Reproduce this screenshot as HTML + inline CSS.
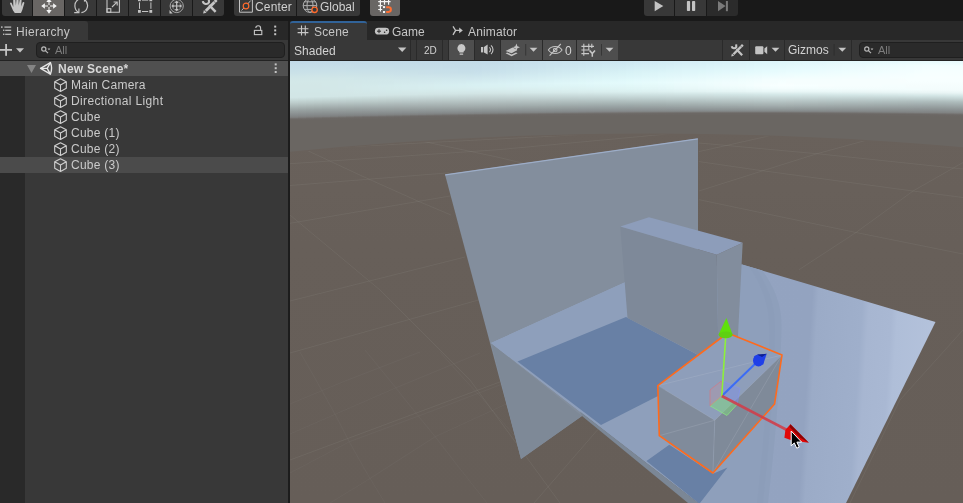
<!DOCTYPE html>
<html>
<head>
<meta charset="utf-8">
<title>Unity Editor</title>
<style>
html,body{margin:0;padding:0;background:#383838;}
body{width:963px;height:503px;overflow:hidden;position:relative;font-family:"Liberation Sans",sans-serif;font-size:12px;color:#d2d2d2;}
.abs{position:absolute;}
.tabtxt,.rtxt,.txt{will-change:transform;}
#topbar{left:0;top:0;width:963px;height:21px;background:#191919;}
.tb{position:absolute;top:0;height:16px;background:#383838;}
.tb.on{background:#696664;}
.tb.dis{background:#2b2b2b;}
.tb svg{position:absolute;left:0;top:0;}
#tabbar{left:0;top:21px;width:963px;height:19px;background:#282828;}
.tab{position:absolute;top:21px;height:19px;background:#383838;}
.tabtxt{position:absolute;top:25px;font-size:12px;color:#c6c6c6;white-space:nowrap;line-height:14px;letter-spacing:0.15px;}
#tool1{left:0;top:40px;width:288px;height:20px;background:#383838;}
#tool2{left:290px;top:40px;width:673px;height:20px;background:#383838;}
.search{position:absolute;top:42px;height:16px;background:#2a2a2a;border:1px solid #1f1f1f;border-radius:4px;box-sizing:border-box;}
.sb{position:absolute;top:40px;height:20px;background:#383838;}
.sb.on{background:#4e4e4e;}
.sep{position:absolute;top:40px;height:20px;width:1px;background:#2a2a2a;}
#hier{left:0;top:60px;width:288px;height:443px;background:#383838;}
#gutter{left:0;top:60px;width:25px;height:443px;background:#292929;}
.row{position:absolute;left:0;width:288px;height:16px;}
.row.sel{background:#4b4b4b;}
.rtxt{position:absolute;font-size:12px;line-height:16px;transform:translateY(-0.4px);color:#cacaca;white-space:nowrap;letter-spacing:0.25px;}
#divider{left:288px;top:21px;width:2px;height:482px;background:#1c1c1c;}
#scene{left:290px;top:61px;width:673px;height:442px;overflow:hidden;}
</style>
</head>
<body>
<!-- TOP TOOLBAR -->
<div id="topbar" class="abs"></div>
<div class="tb" style="left:2px;width:30px;border-bottom-left-radius:3px;"></div>
<div class="tb on" style="left:33px;width:31px;"></div>
<div class="tb" style="left:65px;width:31px;"></div>
<div class="tb" style="left:97px;width:31px;"></div>
<div class="tb" style="left:129px;width:31px;"></div>
<div class="tb" style="left:161px;width:31px;"></div>
<div class="tb" style="left:193px;width:31px;border-bottom-right-radius:3px;"></div>
<div class="tb" style="left:234px;width:62px;border-bottom-left-radius:3px;"></div>
<div class="tb" style="left:297px;width:63px;border-bottom-right-radius:3px;"></div>
<div class="tb on" style="left:370px;width:30px;border-bottom-left-radius:3px;border-bottom-right-radius:3px;"></div>
<div class="tb" style="left:644px;width:30px;border-bottom-left-radius:3px;"></div>
<div class="tb" style="left:675px;width:31px;"></div>
<div class="tb dis" style="left:707px;width:31px;border-bottom-right-radius:3px;"></div>
<div class="abs txt" style="left:255px;top:-0.5px;font-size:12px;line-height:15px;color:#d0d0d0;letter-spacing:0.15px;">Center</div>
<div class="abs txt" style="left:320px;top:-0.5px;font-size:12px;line-height:15px;color:#d0d0d0;">Global</div>

<!-- TAB BAR -->
<div id="tabbar" class="abs"></div>
<div class="tab" style="left:0;width:88px;border-top-right-radius:3px;"></div>
<div class="tab" style="left:290px;width:77px;border-top:2px solid #316399;box-sizing:border-box;border-top-left-radius:3px;border-top-right-radius:3px;"></div>
<div class="tabtxt" style="left:16px;letter-spacing:0.3px;">Hierarchy</div>
<div class="tabtxt" style="left:314px;">Scene</div>
<div class="tabtxt" style="left:392px;letter-spacing:0;">Game</div>
<div class="tabtxt" style="left:467.5px;">Animator</div>

<!-- TOOL ROWS -->
<div id="tool1" class="abs"></div>
<div id="tool2" class="abs"></div>
<div class="search" style="left:36px;width:249px;"></div>
<div class="abs txt" style="left:54.8px;top:42.8px;font-size:11px;line-height:14px;color:#7d7d7d;">All</div>
<div class="search" style="left:859px;width:120px;"></div>
<div class="abs txt" style="left:878.2px;top:42.8px;font-size:11px;line-height:14px;color:#7d7d7d;">All</div>

<div class="abs txt" style="left:294px;top:43.5px;font-size:12px;line-height:14px;color:#d2d2d2;letter-spacing:0.05px;">Shaded</div>
<div class="sep" style="left:410px;"></div>
<div class="sep" style="left:416px;"></div>
<div class="abs txt" style="left:423.5px;top:44px;font-size:10px;line-height:13px;color:#d2d2d2;">2D</div>
<div class="sep" style="left:442px;"></div>
<div class="sep" style="left:448px;"></div>
<div class="sb on" style="left:449px;width:25px;"></div>
<div class="sep" style="left:474px;"></div>
<div class="sep" style="left:500px;"></div>
<div class="sb on" style="left:501px;width:41px;"></div>
<div class="sep" style="left:542px;"></div>
<div class="sb on" style="left:543px;width:33px;"></div>
<div class="sep" style="left:576px;"></div>
<div class="sb on" style="left:577px;width:41px;"></div>
<div class="abs txt" style="left:564.8px;top:43.5px;font-size:12px;line-height:14px;color:#d2d2d2;">0</div>
<div class="sep" style="left:722px;"></div>
<div class="sep" style="left:749px;"></div>
<div class="sep" style="left:784px;"></div>
<div class="sep" style="left:851px;"></div>
<div class="abs txt" style="left:788px;top:43px;font-size:12px;line-height:14px;color:#d2d2d2;letter-spacing:0;">Gizmos</div>

<!-- HIERARCHY -->
<div id="hier" class="abs"></div>
<div id="gutter" class="abs"></div>
<div class="abs" style="left:0;top:60px;width:288px;height:1px;background:#232323;"></div>
<div class="row sel" style="top:61px;height:15px;background:#505050;"></div>
<div class="row sel" style="top:157px;"></div>
<div class="rtxt" style="left:58px;top:61px;font-weight:bold;color:#d8d8d8;">New Scene*</div>
<div class="rtxt" style="left:71px;top:77px;">Main Camera</div>
<div class="rtxt" style="left:71px;top:93px;letter-spacing:0.37px;">Directional Light</div>
<div class="rtxt" style="left:71px;top:109px;">Cube</div>
<div class="rtxt" style="left:71px;top:125px;">Cube (1)</div>
<div class="rtxt" style="left:71px;top:141px;">Cube (2)</div>
<div class="rtxt" style="left:71px;top:157px;">Cube (3)</div>

<div id="divider" class="abs"></div>
<div class="abs" style="left:290px;top:60px;width:673px;height:1px;background:#232323;"></div>

<!-- SCENE VIEW -->
<div id="scene" class="abs">
<svg id="scenesvg" width="673" height="442" viewBox="290 61 673 442">
<defs><linearGradient id="sk0" gradientUnits="userSpaceOnUse" x1="0" y1="58.35" x2="0" y2="121.35"><stop offset="0.0000" stop-color="#c1d9e8"/><stop offset="0.0476" stop-color="#c2dae8"/><stop offset="0.0952" stop-color="#c4dce8"/><stop offset="0.1429" stop-color="#c6dee8"/><stop offset="0.1905" stop-color="#c8e0e8"/><stop offset="0.2381" stop-color="#cbe2e8"/><stop offset="0.2857" stop-color="#cfe5e8"/><stop offset="0.3333" stop-color="#d2e7e8"/><stop offset="0.3810" stop-color="#d3e8e8"/><stop offset="0.4286" stop-color="#d3e7e7"/><stop offset="0.4762" stop-color="#d3e7e7"/><stop offset="0.5238" stop-color="#d2e7e7"/><stop offset="0.5714" stop-color="#d2e6e6"/><stop offset="0.6190" stop-color="#d2e6e6"/><stop offset="0.6667" stop-color="#c6d8d7"/><stop offset="0.7143" stop-color="#bac9c8"/><stop offset="0.7619" stop-color="#abb8b7"/><stop offset="0.8254" stop-color="#98a1a1"/><stop offset="0.8413" stop-color="#949c9c"/><stop offset="0.8571" stop-color="#919898"/><stop offset="0.8730" stop-color="#8d9394"/><stop offset="0.8889" stop-color="#898e8f"/><stop offset="0.9048" stop-color="#858a8b"/><stop offset="0.9206" stop-color="#828585"/><stop offset="0.9365" stop-color="#7e7f7f"/><stop offset="0.9524" stop-color="#73716f"/><stop offset="0.9683" stop-color="#6c6865"/><stop offset="0.9841" stop-color="#6b6764"/><stop offset="1.0000" stop-color="#6a6662"/></linearGradient><linearGradient id="sk1" gradientUnits="userSpaceOnUse" x1="0" y1="58.13" x2="0" y2="121.13"><stop offset="0.0000" stop-color="#c1d9e8"/><stop offset="0.0476" stop-color="#c2dae8"/><stop offset="0.0952" stop-color="#c4dce8"/><stop offset="0.1429" stop-color="#c6dee8"/><stop offset="0.1905" stop-color="#c8e0e8"/><stop offset="0.2381" stop-color="#cbe2e8"/><stop offset="0.2857" stop-color="#cfe5e8"/><stop offset="0.3333" stop-color="#d2e7e8"/><stop offset="0.3810" stop-color="#d3e8e8"/><stop offset="0.4286" stop-color="#d3e7e7"/><stop offset="0.4762" stop-color="#d3e7e7"/><stop offset="0.5238" stop-color="#d2e7e7"/><stop offset="0.5714" stop-color="#d2e6e6"/><stop offset="0.6190" stop-color="#d2e6e6"/><stop offset="0.6667" stop-color="#c6d8d7"/><stop offset="0.7143" stop-color="#bac9c8"/><stop offset="0.7619" stop-color="#abb8b7"/><stop offset="0.8254" stop-color="#98a1a1"/><stop offset="0.8413" stop-color="#949c9c"/><stop offset="0.8571" stop-color="#919898"/><stop offset="0.8730" stop-color="#8d9394"/><stop offset="0.8889" stop-color="#898e8f"/><stop offset="0.9048" stop-color="#858a8b"/><stop offset="0.9206" stop-color="#828585"/><stop offset="0.9365" stop-color="#7e7f7f"/><stop offset="0.9524" stop-color="#73716f"/><stop offset="0.9683" stop-color="#6c6865"/><stop offset="0.9841" stop-color="#6b6764"/><stop offset="1.0000" stop-color="#6a6662"/></linearGradient><linearGradient id="sk2" gradientUnits="userSpaceOnUse" x1="0" y1="57.92" x2="0" y2="120.92"><stop offset="0.0000" stop-color="#c1d9e8"/><stop offset="0.0476" stop-color="#c2dae8"/><stop offset="0.0952" stop-color="#c4dce8"/><stop offset="0.1429" stop-color="#c6dee8"/><stop offset="0.1905" stop-color="#c8e0e8"/><stop offset="0.2381" stop-color="#cbe2e8"/><stop offset="0.2857" stop-color="#cfe5e8"/><stop offset="0.3333" stop-color="#d2e7e8"/><stop offset="0.3810" stop-color="#d3e8e8"/><stop offset="0.4286" stop-color="#d3e7e7"/><stop offset="0.4762" stop-color="#d3e7e7"/><stop offset="0.5238" stop-color="#d2e7e7"/><stop offset="0.5714" stop-color="#d2e6e6"/><stop offset="0.6190" stop-color="#d2e6e6"/><stop offset="0.6667" stop-color="#c6d8d7"/><stop offset="0.7143" stop-color="#bac9c8"/><stop offset="0.7619" stop-color="#abb8b7"/><stop offset="0.8254" stop-color="#98a1a1"/><stop offset="0.8413" stop-color="#949c9c"/><stop offset="0.8571" stop-color="#919898"/><stop offset="0.8730" stop-color="#8d9394"/><stop offset="0.8889" stop-color="#898e8f"/><stop offset="0.9048" stop-color="#858a8b"/><stop offset="0.9206" stop-color="#828585"/><stop offset="0.9365" stop-color="#7e7f7f"/><stop offset="0.9524" stop-color="#73716f"/><stop offset="0.9683" stop-color="#6c6865"/><stop offset="0.9841" stop-color="#6b6764"/><stop offset="1.0000" stop-color="#6a6662"/></linearGradient><linearGradient id="sk3" gradientUnits="userSpaceOnUse" x1="0" y1="57.72" x2="0" y2="120.72"><stop offset="0.0000" stop-color="#c1d9e8"/><stop offset="0.0476" stop-color="#c2dae8"/><stop offset="0.0952" stop-color="#c4dce8"/><stop offset="0.1429" stop-color="#c6dee8"/><stop offset="0.1905" stop-color="#c8e0e8"/><stop offset="0.2381" stop-color="#cbe2e8"/><stop offset="0.2857" stop-color="#cfe5e8"/><stop offset="0.3333" stop-color="#d2e7e8"/><stop offset="0.3810" stop-color="#d3e8e8"/><stop offset="0.4286" stop-color="#d3e7e7"/><stop offset="0.4762" stop-color="#d3e7e7"/><stop offset="0.5238" stop-color="#d2e7e7"/><stop offset="0.5714" stop-color="#d2e6e6"/><stop offset="0.6190" stop-color="#d2e6e6"/><stop offset="0.6667" stop-color="#c6d8d7"/><stop offset="0.7143" stop-color="#bac9c8"/><stop offset="0.7619" stop-color="#abb8b7"/><stop offset="0.8254" stop-color="#98a1a1"/><stop offset="0.8413" stop-color="#949c9c"/><stop offset="0.8571" stop-color="#919898"/><stop offset="0.8730" stop-color="#8d9394"/><stop offset="0.8889" stop-color="#898e8f"/><stop offset="0.9048" stop-color="#858a8b"/><stop offset="0.9206" stop-color="#828585"/><stop offset="0.9365" stop-color="#7e7f7f"/><stop offset="0.9524" stop-color="#73716f"/><stop offset="0.9683" stop-color="#6c6865"/><stop offset="0.9841" stop-color="#6b6764"/><stop offset="1.0000" stop-color="#6a6662"/></linearGradient><linearGradient id="sk4" gradientUnits="userSpaceOnUse" x1="0" y1="57.52" x2="0" y2="120.52"><stop offset="0.0000" stop-color="#c1d9e8"/><stop offset="0.0476" stop-color="#c2dae8"/><stop offset="0.0952" stop-color="#c4dce8"/><stop offset="0.1429" stop-color="#c6dee8"/><stop offset="0.1905" stop-color="#c8e0e8"/><stop offset="0.2381" stop-color="#cbe2e8"/><stop offset="0.2857" stop-color="#cee5e8"/><stop offset="0.3333" stop-color="#d2e7e8"/><stop offset="0.3810" stop-color="#d3e8e8"/><stop offset="0.4286" stop-color="#d3e8e8"/><stop offset="0.4762" stop-color="#d3e7e8"/><stop offset="0.5238" stop-color="#d3e7e7"/><stop offset="0.5714" stop-color="#d2e7e7"/><stop offset="0.6190" stop-color="#d2e6e6"/><stop offset="0.6667" stop-color="#c6d8d7"/><stop offset="0.7143" stop-color="#bac9c8"/><stop offset="0.7619" stop-color="#abb8b7"/><stop offset="0.8254" stop-color="#98a1a1"/><stop offset="0.8413" stop-color="#959d9d"/><stop offset="0.8571" stop-color="#919898"/><stop offset="0.8730" stop-color="#8d9394"/><stop offset="0.8889" stop-color="#898f8f"/><stop offset="0.9048" stop-color="#868a8b"/><stop offset="0.9206" stop-color="#828586"/><stop offset="0.9365" stop-color="#7e7f80"/><stop offset="0.9524" stop-color="#73716f"/><stop offset="0.9683" stop-color="#6c6865"/><stop offset="0.9841" stop-color="#6b6764"/><stop offset="1.0000" stop-color="#6a6662"/></linearGradient><linearGradient id="sk5" gradientUnits="userSpaceOnUse" x1="0" y1="57.32" x2="0" y2="120.32"><stop offset="0.0000" stop-color="#c1d9e8"/><stop offset="0.0476" stop-color="#c2dae8"/><stop offset="0.0952" stop-color="#c4dce8"/><stop offset="0.1429" stop-color="#c6dee8"/><stop offset="0.1905" stop-color="#c8e0e8"/><stop offset="0.2381" stop-color="#cbe2e8"/><stop offset="0.2857" stop-color="#cee4e8"/><stop offset="0.3333" stop-color="#d1e7e8"/><stop offset="0.3810" stop-color="#d3e8e8"/><stop offset="0.4286" stop-color="#d3e8e8"/><stop offset="0.4762" stop-color="#d3e8e8"/><stop offset="0.5238" stop-color="#d3e8e8"/><stop offset="0.5714" stop-color="#d3e7e7"/><stop offset="0.6190" stop-color="#d2e6e6"/><stop offset="0.6667" stop-color="#c6d8d7"/><stop offset="0.7143" stop-color="#bac9c8"/><stop offset="0.7619" stop-color="#acb8b8"/><stop offset="0.8254" stop-color="#99a2a2"/><stop offset="0.8413" stop-color="#959d9d"/><stop offset="0.8571" stop-color="#919899"/><stop offset="0.8730" stop-color="#8e9494"/><stop offset="0.8889" stop-color="#8a8f90"/><stop offset="0.9048" stop-color="#868a8b"/><stop offset="0.9206" stop-color="#828586"/><stop offset="0.9365" stop-color="#7e8080"/><stop offset="0.9524" stop-color="#73716f"/><stop offset="0.9683" stop-color="#6c6865"/><stop offset="0.9841" stop-color="#6b6764"/><stop offset="1.0000" stop-color="#6a6662"/></linearGradient><linearGradient id="sk6" gradientUnits="userSpaceOnUse" x1="0" y1="57.13" x2="0" y2="120.13"><stop offset="0.0000" stop-color="#c1d9e8"/><stop offset="0.0476" stop-color="#c2dae8"/><stop offset="0.0952" stop-color="#c4dce8"/><stop offset="0.1429" stop-color="#c6dee8"/><stop offset="0.1905" stop-color="#c8e0e8"/><stop offset="0.2381" stop-color="#cbe2e8"/><stop offset="0.2857" stop-color="#cee4e8"/><stop offset="0.3333" stop-color="#d1e7e9"/><stop offset="0.3810" stop-color="#d3e8e9"/><stop offset="0.4286" stop-color="#d3e8e9"/><stop offset="0.4762" stop-color="#d3e8e9"/><stop offset="0.5238" stop-color="#d3e8e8"/><stop offset="0.5714" stop-color="#d3e7e7"/><stop offset="0.6190" stop-color="#d2e6e6"/><stop offset="0.6667" stop-color="#c6d8d7"/><stop offset="0.7143" stop-color="#bac9c9"/><stop offset="0.7619" stop-color="#acb8b8"/><stop offset="0.8254" stop-color="#99a2a2"/><stop offset="0.8413" stop-color="#969e9e"/><stop offset="0.8571" stop-color="#929999"/><stop offset="0.8730" stop-color="#8e9495"/><stop offset="0.8889" stop-color="#8a8f90"/><stop offset="0.9048" stop-color="#868b8c"/><stop offset="0.9206" stop-color="#828586"/><stop offset="0.9365" stop-color="#7e8080"/><stop offset="0.9524" stop-color="#73716f"/><stop offset="0.9683" stop-color="#6c6865"/><stop offset="0.9841" stop-color="#6b6764"/><stop offset="1.0000" stop-color="#6a6662"/></linearGradient><linearGradient id="sk7" gradientUnits="userSpaceOnUse" x1="0" y1="56.94" x2="0" y2="119.94"><stop offset="0.0000" stop-color="#c1d9e8"/><stop offset="0.0476" stop-color="#c2dae8"/><stop offset="0.0952" stop-color="#c4dce8"/><stop offset="0.1429" stop-color="#c6dee8"/><stop offset="0.1905" stop-color="#c7dfe8"/><stop offset="0.2381" stop-color="#cae2e8"/><stop offset="0.2857" stop-color="#cde4e8"/><stop offset="0.3333" stop-color="#d1e7e9"/><stop offset="0.3810" stop-color="#d2e8e9"/><stop offset="0.4286" stop-color="#d3e8e9"/><stop offset="0.4762" stop-color="#d4e9e9"/><stop offset="0.5238" stop-color="#d4e8e9"/><stop offset="0.5714" stop-color="#d3e7e7"/><stop offset="0.6190" stop-color="#d2e6e6"/><stop offset="0.6667" stop-color="#c6d8d7"/><stop offset="0.7143" stop-color="#bac9c9"/><stop offset="0.7619" stop-color="#acb9b8"/><stop offset="0.8254" stop-color="#9aa3a3"/><stop offset="0.8413" stop-color="#969e9e"/><stop offset="0.8571" stop-color="#92999a"/><stop offset="0.8730" stop-color="#8e9595"/><stop offset="0.8889" stop-color="#8a9091"/><stop offset="0.9048" stop-color="#868b8c"/><stop offset="0.9206" stop-color="#828686"/><stop offset="0.9365" stop-color="#7e8080"/><stop offset="0.9524" stop-color="#73716f"/><stop offset="0.9683" stop-color="#6c6865"/><stop offset="0.9841" stop-color="#6b6764"/><stop offset="1.0000" stop-color="#6a6662"/></linearGradient><linearGradient id="sk8" gradientUnits="userSpaceOnUse" x1="0" y1="56.76" x2="0" y2="119.76"><stop offset="0.0000" stop-color="#c1d9e8"/><stop offset="0.0476" stop-color="#c2dae8"/><stop offset="0.0952" stop-color="#c4dce8"/><stop offset="0.1429" stop-color="#c5dde8"/><stop offset="0.1905" stop-color="#c7dfe8"/><stop offset="0.2381" stop-color="#cae1e8"/><stop offset="0.2857" stop-color="#cde4e8"/><stop offset="0.3333" stop-color="#d0e6e9"/><stop offset="0.3810" stop-color="#d2e8e9"/><stop offset="0.4286" stop-color="#d3e8ea"/><stop offset="0.4762" stop-color="#d4e9ea"/><stop offset="0.5238" stop-color="#d4e9e9"/><stop offset="0.5714" stop-color="#d3e8e8"/><stop offset="0.6190" stop-color="#d2e6e6"/><stop offset="0.6667" stop-color="#c6d8d7"/><stop offset="0.7143" stop-color="#bacac9"/><stop offset="0.7619" stop-color="#acb9b9"/><stop offset="0.8254" stop-color="#9aa3a3"/><stop offset="0.8413" stop-color="#969f9f"/><stop offset="0.8571" stop-color="#929a9a"/><stop offset="0.8730" stop-color="#8f9596"/><stop offset="0.8889" stop-color="#8b9091"/><stop offset="0.9048" stop-color="#878b8c"/><stop offset="0.9206" stop-color="#828687"/><stop offset="0.9365" stop-color="#7e8080"/><stop offset="0.9524" stop-color="#73716f"/><stop offset="0.9683" stop-color="#6c6865"/><stop offset="0.9841" stop-color="#6b6764"/><stop offset="1.0000" stop-color="#6a6662"/></linearGradient><linearGradient id="sk9" gradientUnits="userSpaceOnUse" x1="0" y1="56.57" x2="0" y2="119.57"><stop offset="0.0000" stop-color="#c1d9e8"/><stop offset="0.0476" stop-color="#c2dae8"/><stop offset="0.0952" stop-color="#c4dce8"/><stop offset="0.1429" stop-color="#c5dde8"/><stop offset="0.1905" stop-color="#c7dfe8"/><stop offset="0.2381" stop-color="#cae1e8"/><stop offset="0.2857" stop-color="#cde3e8"/><stop offset="0.3333" stop-color="#d0e6e9"/><stop offset="0.3810" stop-color="#d2e8ea"/><stop offset="0.4286" stop-color="#d3e9ea"/><stop offset="0.4762" stop-color="#d4eaeb"/><stop offset="0.5238" stop-color="#d4e9ea"/><stop offset="0.5714" stop-color="#d3e8e8"/><stop offset="0.6190" stop-color="#d2e6e6"/><stop offset="0.6667" stop-color="#c6d8d7"/><stop offset="0.7143" stop-color="#bbcac9"/><stop offset="0.7619" stop-color="#adb9b9"/><stop offset="0.8254" stop-color="#9ba4a4"/><stop offset="0.8413" stop-color="#979f9f"/><stop offset="0.8571" stop-color="#939a9b"/><stop offset="0.8730" stop-color="#8f9596"/><stop offset="0.8889" stop-color="#8b9191"/><stop offset="0.9048" stop-color="#878c8d"/><stop offset="0.9206" stop-color="#838687"/><stop offset="0.9365" stop-color="#7e8080"/><stop offset="0.9524" stop-color="#737170"/><stop offset="0.9683" stop-color="#6c6865"/><stop offset="0.9841" stop-color="#6b6764"/><stop offset="1.0000" stop-color="#6a6662"/></linearGradient><linearGradient id="sk10" gradientUnits="userSpaceOnUse" x1="0" y1="56.40" x2="0" y2="119.40"><stop offset="0.0000" stop-color="#c1d9e8"/><stop offset="0.0476" stop-color="#c2dae8"/><stop offset="0.0952" stop-color="#c4dce8"/><stop offset="0.1429" stop-color="#c5dde8"/><stop offset="0.1905" stop-color="#c7dfe8"/><stop offset="0.2381" stop-color="#c9e1e8"/><stop offset="0.2857" stop-color="#cce3e8"/><stop offset="0.3333" stop-color="#d0e6e9"/><stop offset="0.3810" stop-color="#d2e8ea"/><stop offset="0.4286" stop-color="#d3e9ea"/><stop offset="0.4762" stop-color="#d5eaeb"/><stop offset="0.5238" stop-color="#d5eaea"/><stop offset="0.5714" stop-color="#d4e8e8"/><stop offset="0.6190" stop-color="#d2e6e6"/><stop offset="0.6667" stop-color="#c6d8d7"/><stop offset="0.7143" stop-color="#bbcac9"/><stop offset="0.7619" stop-color="#adbab9"/><stop offset="0.8254" stop-color="#9ba4a5"/><stop offset="0.8413" stop-color="#97a0a0"/><stop offset="0.8571" stop-color="#939b9b"/><stop offset="0.8730" stop-color="#8f9696"/><stop offset="0.8889" stop-color="#8b9192"/><stop offset="0.9048" stop-color="#878c8d"/><stop offset="0.9206" stop-color="#838687"/><stop offset="0.9365" stop-color="#7e8081"/><stop offset="0.9524" stop-color="#737170"/><stop offset="0.9683" stop-color="#6c6865"/><stop offset="0.9841" stop-color="#6b6764"/><stop offset="1.0000" stop-color="#6a6662"/></linearGradient><linearGradient id="sk11" gradientUnits="userSpaceOnUse" x1="0" y1="56.22" x2="0" y2="119.22"><stop offset="0.0000" stop-color="#c1d9e8"/><stop offset="0.0476" stop-color="#c2dae8"/><stop offset="0.0952" stop-color="#c4dce8"/><stop offset="0.1429" stop-color="#c5dde8"/><stop offset="0.1905" stop-color="#c7dfe8"/><stop offset="0.2381" stop-color="#c9e1e8"/><stop offset="0.2857" stop-color="#cce3e9"/><stop offset="0.3333" stop-color="#d0e6e9"/><stop offset="0.3810" stop-color="#d2e8ea"/><stop offset="0.4286" stop-color="#d3e9eb"/><stop offset="0.4762" stop-color="#d5ebec"/><stop offset="0.5238" stop-color="#d5eaeb"/><stop offset="0.5714" stop-color="#d4e8e9"/><stop offset="0.6190" stop-color="#d2e5e5"/><stop offset="0.6667" stop-color="#c7d8d7"/><stop offset="0.7143" stop-color="#bbcac9"/><stop offset="0.7619" stop-color="#adbaba"/><stop offset="0.8254" stop-color="#9ca5a5"/><stop offset="0.8413" stop-color="#98a0a0"/><stop offset="0.8571" stop-color="#949b9c"/><stop offset="0.8730" stop-color="#909697"/><stop offset="0.8889" stop-color="#8b9192"/><stop offset="0.9048" stop-color="#878c8d"/><stop offset="0.9206" stop-color="#838787"/><stop offset="0.9365" stop-color="#7f8181"/><stop offset="0.9524" stop-color="#737170"/><stop offset="0.9683" stop-color="#6c6865"/><stop offset="0.9841" stop-color="#6b6764"/><stop offset="1.0000" stop-color="#6a6662"/></linearGradient><linearGradient id="sk12" gradientUnits="userSpaceOnUse" x1="0" y1="56.05" x2="0" y2="119.05"><stop offset="0.0000" stop-color="#c1d9e8"/><stop offset="0.0476" stop-color="#c2dae8"/><stop offset="0.0952" stop-color="#c3dbe8"/><stop offset="0.1429" stop-color="#c5dde8"/><stop offset="0.1905" stop-color="#c7dfe8"/><stop offset="0.2381" stop-color="#c9e0e8"/><stop offset="0.2857" stop-color="#cce3e9"/><stop offset="0.3333" stop-color="#cfe6ea"/><stop offset="0.3810" stop-color="#d2e8ea"/><stop offset="0.4286" stop-color="#d3e9eb"/><stop offset="0.4762" stop-color="#d5ebec"/><stop offset="0.5238" stop-color="#d5ebeb"/><stop offset="0.5714" stop-color="#d4e9e9"/><stop offset="0.6190" stop-color="#d2e5e5"/><stop offset="0.6667" stop-color="#c7d8d7"/><stop offset="0.7143" stop-color="#bbcac9"/><stop offset="0.7619" stop-color="#aebaba"/><stop offset="0.8254" stop-color="#9ca6a6"/><stop offset="0.8413" stop-color="#98a1a1"/><stop offset="0.8571" stop-color="#949c9c"/><stop offset="0.8730" stop-color="#909797"/><stop offset="0.8889" stop-color="#8c9292"/><stop offset="0.9048" stop-color="#888d8e"/><stop offset="0.9206" stop-color="#838787"/><stop offset="0.9365" stop-color="#7f8181"/><stop offset="0.9524" stop-color="#737270"/><stop offset="0.9683" stop-color="#6c6865"/><stop offset="0.9841" stop-color="#6b6764"/><stop offset="1.0000" stop-color="#6a6662"/></linearGradient><linearGradient id="sk13" gradientUnits="userSpaceOnUse" x1="0" y1="55.89" x2="0" y2="118.89"><stop offset="0.0000" stop-color="#c2dae8"/><stop offset="0.0476" stop-color="#c2dae8"/><stop offset="0.0952" stop-color="#c3dbe8"/><stop offset="0.1429" stop-color="#c5dde8"/><stop offset="0.1905" stop-color="#c6dee8"/><stop offset="0.2381" stop-color="#c9e0e8"/><stop offset="0.2857" stop-color="#cbe2e9"/><stop offset="0.3333" stop-color="#cfe5ea"/><stop offset="0.3810" stop-color="#d2e8eb"/><stop offset="0.4286" stop-color="#d4eaec"/><stop offset="0.4762" stop-color="#d5eced"/><stop offset="0.5238" stop-color="#d6ebec"/><stop offset="0.5714" stop-color="#d4e9e9"/><stop offset="0.6190" stop-color="#d2e5e5"/><stop offset="0.6667" stop-color="#c7d8d7"/><stop offset="0.7143" stop-color="#bbcaca"/><stop offset="0.7619" stop-color="#aebaba"/><stop offset="0.8254" stop-color="#9da6a6"/><stop offset="0.8413" stop-color="#99a1a1"/><stop offset="0.8571" stop-color="#949c9c"/><stop offset="0.8730" stop-color="#909798"/><stop offset="0.8889" stop-color="#8c9293"/><stop offset="0.9048" stop-color="#888d8e"/><stop offset="0.9206" stop-color="#838788"/><stop offset="0.9365" stop-color="#7f8181"/><stop offset="0.9524" stop-color="#737270"/><stop offset="0.9683" stop-color="#6c6865"/><stop offset="0.9841" stop-color="#6b6764"/><stop offset="1.0000" stop-color="#6a6662"/></linearGradient><linearGradient id="sk14" gradientUnits="userSpaceOnUse" x1="0" y1="55.73" x2="0" y2="118.73"><stop offset="0.0000" stop-color="#c2dae8"/><stop offset="0.0476" stop-color="#c2dae8"/><stop offset="0.0952" stop-color="#c3dbe8"/><stop offset="0.1429" stop-color="#c5dde8"/><stop offset="0.1905" stop-color="#c6dee8"/><stop offset="0.2381" stop-color="#c8e0e8"/><stop offset="0.2857" stop-color="#cbe2e9"/><stop offset="0.3333" stop-color="#cfe5ea"/><stop offset="0.3810" stop-color="#d2e8eb"/><stop offset="0.4286" stop-color="#d4eaec"/><stop offset="0.4762" stop-color="#d6ecee"/><stop offset="0.5238" stop-color="#d6eced"/><stop offset="0.5714" stop-color="#d5e9e9"/><stop offset="0.6190" stop-color="#d2e5e5"/><stop offset="0.6667" stop-color="#c7d8d8"/><stop offset="0.7143" stop-color="#bbcaca"/><stop offset="0.7619" stop-color="#aebbbb"/><stop offset="0.8254" stop-color="#9da7a7"/><stop offset="0.8413" stop-color="#99a2a2"/><stop offset="0.8571" stop-color="#959d9d"/><stop offset="0.8730" stop-color="#919798"/><stop offset="0.8889" stop-color="#8c9293"/><stop offset="0.9048" stop-color="#888d8e"/><stop offset="0.9206" stop-color="#838788"/><stop offset="0.9365" stop-color="#7f8181"/><stop offset="0.9524" stop-color="#737270"/><stop offset="0.9683" stop-color="#6c6865"/><stop offset="0.9841" stop-color="#6b6764"/><stop offset="1.0000" stop-color="#6a6662"/></linearGradient><linearGradient id="sk15" gradientUnits="userSpaceOnUse" x1="0" y1="55.57" x2="0" y2="118.57"><stop offset="0.0000" stop-color="#c2dae8"/><stop offset="0.0476" stop-color="#c2dae8"/><stop offset="0.0952" stop-color="#c3dbe8"/><stop offset="0.1429" stop-color="#c5dde8"/><stop offset="0.1905" stop-color="#c6dee8"/><stop offset="0.2381" stop-color="#c8e0e8"/><stop offset="0.2857" stop-color="#cbe2e9"/><stop offset="0.3333" stop-color="#cee5ea"/><stop offset="0.3810" stop-color="#d1e8eb"/><stop offset="0.4286" stop-color="#d4eaed"/><stop offset="0.4762" stop-color="#d6ecee"/><stop offset="0.5238" stop-color="#d6eced"/><stop offset="0.5714" stop-color="#d5e9ea"/><stop offset="0.6190" stop-color="#d2e5e5"/><stop offset="0.6667" stop-color="#c7d8d8"/><stop offset="0.7143" stop-color="#bbcaca"/><stop offset="0.7619" stop-color="#afbbbb"/><stop offset="0.8254" stop-color="#9ea7a7"/><stop offset="0.8413" stop-color="#99a2a2"/><stop offset="0.8571" stop-color="#959d9d"/><stop offset="0.8730" stop-color="#919898"/><stop offset="0.8889" stop-color="#8d9393"/><stop offset="0.9048" stop-color="#888e8f"/><stop offset="0.9206" stop-color="#848888"/><stop offset="0.9365" stop-color="#7f8181"/><stop offset="0.9524" stop-color="#737270"/><stop offset="0.9683" stop-color="#6c6865"/><stop offset="0.9841" stop-color="#6b6764"/><stop offset="1.0000" stop-color="#6a6662"/></linearGradient><linearGradient id="sk16" gradientUnits="userSpaceOnUse" x1="0" y1="55.41" x2="0" y2="118.41"><stop offset="0.0000" stop-color="#c2dae8"/><stop offset="0.0476" stop-color="#c2dae8"/><stop offset="0.0952" stop-color="#c3dbe8"/><stop offset="0.1429" stop-color="#c4dce8"/><stop offset="0.1905" stop-color="#c6dee8"/><stop offset="0.2381" stop-color="#c8e0e8"/><stop offset="0.2857" stop-color="#cae1e9"/><stop offset="0.3333" stop-color="#cee5ea"/><stop offset="0.3810" stop-color="#d1e8ec"/><stop offset="0.4286" stop-color="#d4eaed"/><stop offset="0.4762" stop-color="#d6edef"/><stop offset="0.5238" stop-color="#d7edee"/><stop offset="0.5714" stop-color="#d5eaea"/><stop offset="0.6190" stop-color="#d2e5e5"/><stop offset="0.6667" stop-color="#c7d8d8"/><stop offset="0.7143" stop-color="#bccaca"/><stop offset="0.7619" stop-color="#afbbbb"/><stop offset="0.8254" stop-color="#9ea8a8"/><stop offset="0.8413" stop-color="#9aa3a3"/><stop offset="0.8571" stop-color="#969d9e"/><stop offset="0.8730" stop-color="#919899"/><stop offset="0.8889" stop-color="#8d9394"/><stop offset="0.9048" stop-color="#888e8f"/><stop offset="0.9206" stop-color="#848888"/><stop offset="0.9365" stop-color="#7f8182"/><stop offset="0.9524" stop-color="#747270"/><stop offset="0.9683" stop-color="#6c6865"/><stop offset="0.9841" stop-color="#6b6764"/><stop offset="1.0000" stop-color="#6a6662"/></linearGradient><linearGradient id="sk17" gradientUnits="userSpaceOnUse" x1="0" y1="55.26" x2="0" y2="118.26"><stop offset="0.0000" stop-color="#c2dae8"/><stop offset="0.0476" stop-color="#c2dae8"/><stop offset="0.0952" stop-color="#c3dbe8"/><stop offset="0.1429" stop-color="#c4dce8"/><stop offset="0.1905" stop-color="#c6dee8"/><stop offset="0.2381" stop-color="#c8dfe9"/><stop offset="0.2857" stop-color="#cae1e9"/><stop offset="0.3333" stop-color="#cee5eb"/><stop offset="0.3810" stop-color="#d1e8ec"/><stop offset="0.4286" stop-color="#d4eaee"/><stop offset="0.4762" stop-color="#d7edef"/><stop offset="0.5238" stop-color="#d7edee"/><stop offset="0.5714" stop-color="#d5eaea"/><stop offset="0.6190" stop-color="#d2e5e5"/><stop offset="0.6667" stop-color="#c7d8d8"/><stop offset="0.7143" stop-color="#bccaca"/><stop offset="0.7619" stop-color="#afbcbc"/><stop offset="0.8254" stop-color="#9fa8a8"/><stop offset="0.8413" stop-color="#9aa3a3"/><stop offset="0.8571" stop-color="#969e9e"/><stop offset="0.8730" stop-color="#929999"/><stop offset="0.8889" stop-color="#8d9394"/><stop offset="0.9048" stop-color="#898e8f"/><stop offset="0.9206" stop-color="#848889"/><stop offset="0.9365" stop-color="#7f8282"/><stop offset="0.9524" stop-color="#747270"/><stop offset="0.9683" stop-color="#6c6865"/><stop offset="0.9841" stop-color="#6b6764"/><stop offset="1.0000" stop-color="#6a6662"/></linearGradient><linearGradient id="sk18" gradientUnits="userSpaceOnUse" x1="0" y1="55.12" x2="0" y2="118.12"><stop offset="0.0000" stop-color="#c2dae8"/><stop offset="0.0476" stop-color="#c2dae8"/><stop offset="0.0952" stop-color="#c3dbe8"/><stop offset="0.1429" stop-color="#c4dce8"/><stop offset="0.1905" stop-color="#c6dee8"/><stop offset="0.2381" stop-color="#c7dfe9"/><stop offset="0.2857" stop-color="#c9e1e9"/><stop offset="0.3333" stop-color="#cee4eb"/><stop offset="0.3810" stop-color="#d1e8ec"/><stop offset="0.4286" stop-color="#d4ebee"/><stop offset="0.4762" stop-color="#d7eef0"/><stop offset="0.5238" stop-color="#d7eeef"/><stop offset="0.5714" stop-color="#d6eaeb"/><stop offset="0.6190" stop-color="#d2e5e5"/><stop offset="0.6667" stop-color="#c7d8d8"/><stop offset="0.7143" stop-color="#bccaca"/><stop offset="0.7619" stop-color="#b0bcbc"/><stop offset="0.8254" stop-color="#9fa9a9"/><stop offset="0.8413" stop-color="#9ba4a4"/><stop offset="0.8571" stop-color="#969e9f"/><stop offset="0.8730" stop-color="#92999a"/><stop offset="0.8889" stop-color="#8d9495"/><stop offset="0.9048" stop-color="#898f90"/><stop offset="0.9206" stop-color="#848889"/><stop offset="0.9365" stop-color="#7f8282"/><stop offset="0.9524" stop-color="#747270"/><stop offset="0.9683" stop-color="#6c6865"/><stop offset="0.9841" stop-color="#6b6764"/><stop offset="1.0000" stop-color="#6a6662"/></linearGradient><linearGradient id="sk19" gradientUnits="userSpaceOnUse" x1="0" y1="54.98" x2="0" y2="117.98"><stop offset="0.0000" stop-color="#c2dae8"/><stop offset="0.0476" stop-color="#c2dae8"/><stop offset="0.0952" stop-color="#c3dbe8"/><stop offset="0.1429" stop-color="#c4dce8"/><stop offset="0.1905" stop-color="#c5dde8"/><stop offset="0.2381" stop-color="#c7dfe9"/><stop offset="0.2857" stop-color="#c9e1e9"/><stop offset="0.3333" stop-color="#cde4eb"/><stop offset="0.3810" stop-color="#d1e8ed"/><stop offset="0.4286" stop-color="#d4ebef"/><stop offset="0.4762" stop-color="#d7eef1"/><stop offset="0.5238" stop-color="#d8eeef"/><stop offset="0.5714" stop-color="#d6eaeb"/><stop offset="0.6190" stop-color="#d2e5e5"/><stop offset="0.6667" stop-color="#c7d8d8"/><stop offset="0.7143" stop-color="#bccbca"/><stop offset="0.7619" stop-color="#b0bcbc"/><stop offset="0.8254" stop-color="#a0a9a9"/><stop offset="0.8413" stop-color="#9ba4a4"/><stop offset="0.8571" stop-color="#979f9f"/><stop offset="0.8730" stop-color="#929a9a"/><stop offset="0.8889" stop-color="#8e9495"/><stop offset="0.9048" stop-color="#898f90"/><stop offset="0.9206" stop-color="#848889"/><stop offset="0.9365" stop-color="#808282"/><stop offset="0.9524" stop-color="#747270"/><stop offset="0.9683" stop-color="#6c6865"/><stop offset="0.9841" stop-color="#6b6764"/><stop offset="1.0000" stop-color="#6a6662"/></linearGradient><linearGradient id="sk20" gradientUnits="userSpaceOnUse" x1="0" y1="54.84" x2="0" y2="117.84"><stop offset="0.0000" stop-color="#c2dae8"/><stop offset="0.0476" stop-color="#c2dae8"/><stop offset="0.0952" stop-color="#c3dbe8"/><stop offset="0.1429" stop-color="#c4dce8"/><stop offset="0.1905" stop-color="#c5dde8"/><stop offset="0.2381" stop-color="#c7dfe9"/><stop offset="0.2857" stop-color="#c9e0e9"/><stop offset="0.3333" stop-color="#cde4eb"/><stop offset="0.3810" stop-color="#d1e8ed"/><stop offset="0.4286" stop-color="#d4ebef"/><stop offset="0.4762" stop-color="#d7eff1"/><stop offset="0.5238" stop-color="#d8eef0"/><stop offset="0.5714" stop-color="#d6ebeb"/><stop offset="0.6190" stop-color="#d2e5e5"/><stop offset="0.6667" stop-color="#c7d8d8"/><stop offset="0.7143" stop-color="#bccbca"/><stop offset="0.7619" stop-color="#b0bdbd"/><stop offset="0.8254" stop-color="#a0aaaa"/><stop offset="0.8413" stop-color="#9ca5a5"/><stop offset="0.8571" stop-color="#979fa0"/><stop offset="0.8730" stop-color="#939a9b"/><stop offset="0.8889" stop-color="#8e9595"/><stop offset="0.9048" stop-color="#898f90"/><stop offset="0.9206" stop-color="#858989"/><stop offset="0.9365" stop-color="#808282"/><stop offset="0.9524" stop-color="#747270"/><stop offset="0.9683" stop-color="#6c6865"/><stop offset="0.9841" stop-color="#6b6764"/><stop offset="1.0000" stop-color="#6a6662"/></linearGradient><linearGradient id="sk21" gradientUnits="userSpaceOnUse" x1="0" y1="54.70" x2="0" y2="117.70"><stop offset="0.0000" stop-color="#c2dae8"/><stop offset="0.0476" stop-color="#c2dae8"/><stop offset="0.0952" stop-color="#c3dbe8"/><stop offset="0.1429" stop-color="#c4dce8"/><stop offset="0.1905" stop-color="#c5dde8"/><stop offset="0.2381" stop-color="#c6dee9"/><stop offset="0.2857" stop-color="#c8e0e9"/><stop offset="0.3333" stop-color="#cde4eb"/><stop offset="0.3810" stop-color="#d1e8ed"/><stop offset="0.4286" stop-color="#d4ebef"/><stop offset="0.4762" stop-color="#d8eff2"/><stop offset="0.5238" stop-color="#d8eff0"/><stop offset="0.5714" stop-color="#d6ebeb"/><stop offset="0.6190" stop-color="#d2e5e5"/><stop offset="0.6667" stop-color="#c7d8d8"/><stop offset="0.7143" stop-color="#bccbcb"/><stop offset="0.7619" stop-color="#b1bdbd"/><stop offset="0.8254" stop-color="#a1abab"/><stop offset="0.8413" stop-color="#9ca5a5"/><stop offset="0.8571" stop-color="#97a0a0"/><stop offset="0.8730" stop-color="#939a9b"/><stop offset="0.8889" stop-color="#8e9596"/><stop offset="0.9048" stop-color="#8a8f90"/><stop offset="0.9206" stop-color="#85898a"/><stop offset="0.9365" stop-color="#808283"/><stop offset="0.9524" stop-color="#747270"/><stop offset="0.9683" stop-color="#6c6865"/><stop offset="0.9841" stop-color="#6b6764"/><stop offset="1.0000" stop-color="#6a6662"/></linearGradient><linearGradient id="sk22" gradientUnits="userSpaceOnUse" x1="0" y1="54.57" x2="0" y2="117.57"><stop offset="0.0000" stop-color="#c2dae8"/><stop offset="0.0476" stop-color="#c2dae8"/><stop offset="0.0952" stop-color="#c3dbe8"/><stop offset="0.1429" stop-color="#c4dce8"/><stop offset="0.1905" stop-color="#c5dde8"/><stop offset="0.2381" stop-color="#c6dee9"/><stop offset="0.2857" stop-color="#c8e0e9"/><stop offset="0.3333" stop-color="#cce4eb"/><stop offset="0.3810" stop-color="#d1e7ee"/><stop offset="0.4286" stop-color="#d4ecf0"/><stop offset="0.4762" stop-color="#d8f0f2"/><stop offset="0.5238" stop-color="#d9eff1"/><stop offset="0.5714" stop-color="#d6ebec"/><stop offset="0.6190" stop-color="#d2e5e5"/><stop offset="0.6667" stop-color="#c7d8d8"/><stop offset="0.7143" stop-color="#bdcbcb"/><stop offset="0.7619" stop-color="#b1bdbd"/><stop offset="0.8254" stop-color="#a1abab"/><stop offset="0.8413" stop-color="#9da6a6"/><stop offset="0.8571" stop-color="#98a0a1"/><stop offset="0.8730" stop-color="#939b9b"/><stop offset="0.8889" stop-color="#8f9596"/><stop offset="0.9048" stop-color="#8a9091"/><stop offset="0.9206" stop-color="#85898a"/><stop offset="0.9365" stop-color="#808383"/><stop offset="0.9524" stop-color="#747270"/><stop offset="0.9683" stop-color="#6c6865"/><stop offset="0.9841" stop-color="#6b6764"/><stop offset="1.0000" stop-color="#6a6662"/></linearGradient><linearGradient id="sk23" gradientUnits="userSpaceOnUse" x1="0" y1="54.45" x2="0" y2="117.45"><stop offset="0.0000" stop-color="#c2dae8"/><stop offset="0.0476" stop-color="#c3dbe8"/><stop offset="0.0952" stop-color="#c3dbe8"/><stop offset="0.1429" stop-color="#c4dce8"/><stop offset="0.1905" stop-color="#c5dde9"/><stop offset="0.2381" stop-color="#c6dee9"/><stop offset="0.2857" stop-color="#c8e0ea"/><stop offset="0.3333" stop-color="#cce4ec"/><stop offset="0.3810" stop-color="#d1e8ee"/><stop offset="0.4286" stop-color="#d5ecf0"/><stop offset="0.4762" stop-color="#d8f0f3"/><stop offset="0.5238" stop-color="#d9f0f1"/><stop offset="0.5714" stop-color="#d7ebec"/><stop offset="0.6190" stop-color="#d2e5e5"/><stop offset="0.6667" stop-color="#c8d8d8"/><stop offset="0.7143" stop-color="#bdcbcb"/><stop offset="0.7619" stop-color="#b1bebe"/><stop offset="0.8254" stop-color="#a1abab"/><stop offset="0.8413" stop-color="#9da6a6"/><stop offset="0.8571" stop-color="#98a1a1"/><stop offset="0.8730" stop-color="#939b9c"/><stop offset="0.8889" stop-color="#8f9696"/><stop offset="0.9048" stop-color="#8a9091"/><stop offset="0.9206" stop-color="#85898a"/><stop offset="0.9365" stop-color="#808383"/><stop offset="0.9524" stop-color="#747270"/><stop offset="0.9683" stop-color="#6c6865"/><stop offset="0.9841" stop-color="#6b6764"/><stop offset="1.0000" stop-color="#6a6662"/></linearGradient><linearGradient id="sk24" gradientUnits="userSpaceOnUse" x1="0" y1="54.32" x2="0" y2="117.32"><stop offset="0.0000" stop-color="#c3dbe9"/><stop offset="0.0476" stop-color="#c3dbe9"/><stop offset="0.0952" stop-color="#c3dce9"/><stop offset="0.1429" stop-color="#c4dce9"/><stop offset="0.1905" stop-color="#c6dee9"/><stop offset="0.2381" stop-color="#c7dfea"/><stop offset="0.2857" stop-color="#c9e1ea"/><stop offset="0.3333" stop-color="#cde5ec"/><stop offset="0.3810" stop-color="#d1e9ee"/><stop offset="0.4286" stop-color="#d5edf1"/><stop offset="0.4762" stop-color="#d9f1f3"/><stop offset="0.5238" stop-color="#d9f0f2"/><stop offset="0.5714" stop-color="#d7eced"/><stop offset="0.6190" stop-color="#d3e5e5"/><stop offset="0.6667" stop-color="#c8d8d8"/><stop offset="0.7143" stop-color="#bdcbcb"/><stop offset="0.7619" stop-color="#b1bebe"/><stop offset="0.8254" stop-color="#a1abab"/><stop offset="0.8413" stop-color="#9da6a6"/><stop offset="0.8571" stop-color="#98a1a1"/><stop offset="0.8730" stop-color="#939b9c"/><stop offset="0.8889" stop-color="#8f9696"/><stop offset="0.9048" stop-color="#8a9091"/><stop offset="0.9206" stop-color="#858a8a"/><stop offset="0.9365" stop-color="#808383"/><stop offset="0.9524" stop-color="#747270"/><stop offset="0.9683" stop-color="#6c6865"/><stop offset="0.9841" stop-color="#6b6764"/><stop offset="1.0000" stop-color="#6a6662"/></linearGradient><linearGradient id="sk25" gradientUnits="userSpaceOnUse" x1="0" y1="54.20" x2="0" y2="117.20"><stop offset="0.0000" stop-color="#c3dbe9"/><stop offset="0.0476" stop-color="#c4dce9"/><stop offset="0.0952" stop-color="#c4dce9"/><stop offset="0.1429" stop-color="#c5dde9"/><stop offset="0.1905" stop-color="#c6dfea"/><stop offset="0.2381" stop-color="#c8e0ea"/><stop offset="0.2857" stop-color="#cae2eb"/><stop offset="0.3333" stop-color="#cee6ed"/><stop offset="0.3810" stop-color="#d2e9ef"/><stop offset="0.4286" stop-color="#d6edf1"/><stop offset="0.4762" stop-color="#daf1f4"/><stop offset="0.5238" stop-color="#daf1f2"/><stop offset="0.5714" stop-color="#d8eced"/><stop offset="0.6190" stop-color="#d3e6e6"/><stop offset="0.6667" stop-color="#c8d9d9"/><stop offset="0.7143" stop-color="#bdcccc"/><stop offset="0.7619" stop-color="#b1bebe"/><stop offset="0.8254" stop-color="#a1abab"/><stop offset="0.8413" stop-color="#9da6a6"/><stop offset="0.8571" stop-color="#98a1a1"/><stop offset="0.8730" stop-color="#939b9c"/><stop offset="0.8889" stop-color="#8f9697"/><stop offset="0.9048" stop-color="#8a9091"/><stop offset="0.9206" stop-color="#858a8a"/><stop offset="0.9365" stop-color="#808383"/><stop offset="0.9524" stop-color="#747270"/><stop offset="0.9683" stop-color="#6c6865"/><stop offset="0.9841" stop-color="#6b6764"/><stop offset="1.0000" stop-color="#6a6662"/></linearGradient><linearGradient id="sk26" gradientUnits="userSpaceOnUse" x1="0" y1="54.09" x2="0" y2="117.09"><stop offset="0.0000" stop-color="#c4dcea"/><stop offset="0.0476" stop-color="#c4dcea"/><stop offset="0.0952" stop-color="#c4ddea"/><stop offset="0.1429" stop-color="#c5deea"/><stop offset="0.1905" stop-color="#c7dfea"/><stop offset="0.2381" stop-color="#c8e1eb"/><stop offset="0.2857" stop-color="#cae3ec"/><stop offset="0.3333" stop-color="#cfe6ee"/><stop offset="0.3810" stop-color="#d3eaf0"/><stop offset="0.4286" stop-color="#d7eef2"/><stop offset="0.4762" stop-color="#daf2f4"/><stop offset="0.5238" stop-color="#daf1f2"/><stop offset="0.5714" stop-color="#d8eded"/><stop offset="0.6190" stop-color="#d4e6e6"/><stop offset="0.6667" stop-color="#c8d9d9"/><stop offset="0.7143" stop-color="#bdcccc"/><stop offset="0.7619" stop-color="#b1bebe"/><stop offset="0.8254" stop-color="#a1abab"/><stop offset="0.8413" stop-color="#9da6a6"/><stop offset="0.8571" stop-color="#98a1a1"/><stop offset="0.8730" stop-color="#939b9c"/><stop offset="0.8889" stop-color="#8f9697"/><stop offset="0.9048" stop-color="#8a9091"/><stop offset="0.9206" stop-color="#858a8b"/><stop offset="0.9365" stop-color="#808383"/><stop offset="0.9524" stop-color="#747270"/><stop offset="0.9683" stop-color="#6c6865"/><stop offset="0.9841" stop-color="#6b6764"/><stop offset="1.0000" stop-color="#6a6662"/></linearGradient><linearGradient id="sk27" gradientUnits="userSpaceOnUse" x1="0" y1="53.98" x2="0" y2="116.98"><stop offset="0.0000" stop-color="#c4dcea"/><stop offset="0.0476" stop-color="#c5ddea"/><stop offset="0.0952" stop-color="#c5ddea"/><stop offset="0.1429" stop-color="#c6deea"/><stop offset="0.1905" stop-color="#c8e0eb"/><stop offset="0.2381" stop-color="#c9e2eb"/><stop offset="0.2857" stop-color="#cbe4ec"/><stop offset="0.3333" stop-color="#cfe7ee"/><stop offset="0.3810" stop-color="#d3ebf0"/><stop offset="0.4286" stop-color="#d7eff3"/><stop offset="0.4762" stop-color="#dbf2f5"/><stop offset="0.5238" stop-color="#dbf1f3"/><stop offset="0.5714" stop-color="#d9edee"/><stop offset="0.6190" stop-color="#d4e7e7"/><stop offset="0.6667" stop-color="#c9dada"/><stop offset="0.7143" stop-color="#becccc"/><stop offset="0.7619" stop-color="#b1bebe"/><stop offset="0.8254" stop-color="#a1abab"/><stop offset="0.8413" stop-color="#9ca6a6"/><stop offset="0.8571" stop-color="#98a1a1"/><stop offset="0.8730" stop-color="#939b9c"/><stop offset="0.8889" stop-color="#8f9697"/><stop offset="0.9048" stop-color="#8a9092"/><stop offset="0.9206" stop-color="#868a8b"/><stop offset="0.9365" stop-color="#808383"/><stop offset="0.9524" stop-color="#747270"/><stop offset="0.9683" stop-color="#6c6865"/><stop offset="0.9841" stop-color="#6b6764"/><stop offset="1.0000" stop-color="#6a6662"/></linearGradient><linearGradient id="sk28" gradientUnits="userSpaceOnUse" x1="0" y1="53.87" x2="0" y2="116.87"><stop offset="0.0000" stop-color="#c4ddea"/><stop offset="0.0476" stop-color="#c5deeb"/><stop offset="0.0952" stop-color="#c5deeb"/><stop offset="0.1429" stop-color="#c6dfeb"/><stop offset="0.1905" stop-color="#c8e1ec"/><stop offset="0.2381" stop-color="#cae2ec"/><stop offset="0.2857" stop-color="#cce5ed"/><stop offset="0.3333" stop-color="#d0e8ef"/><stop offset="0.3810" stop-color="#d4ecf1"/><stop offset="0.4286" stop-color="#d8eff3"/><stop offset="0.4762" stop-color="#dbf3f5"/><stop offset="0.5238" stop-color="#dbf2f3"/><stop offset="0.5714" stop-color="#d9eeee"/><stop offset="0.6190" stop-color="#d4e7e7"/><stop offset="0.6667" stop-color="#c9dada"/><stop offset="0.7143" stop-color="#becdcd"/><stop offset="0.7619" stop-color="#b1bfbf"/><stop offset="0.8254" stop-color="#a1acac"/><stop offset="0.8413" stop-color="#9ca6a6"/><stop offset="0.8571" stop-color="#98a1a1"/><stop offset="0.8730" stop-color="#939b9c"/><stop offset="0.8889" stop-color="#8f9697"/><stop offset="0.9048" stop-color="#8a9092"/><stop offset="0.9206" stop-color="#868a8b"/><stop offset="0.9365" stop-color="#808383"/><stop offset="0.9524" stop-color="#747270"/><stop offset="0.9683" stop-color="#6c6865"/><stop offset="0.9841" stop-color="#6b6764"/><stop offset="1.0000" stop-color="#6a6662"/></linearGradient><linearGradient id="sk29" gradientUnits="userSpaceOnUse" x1="0" y1="53.77" x2="0" y2="116.77"><stop offset="0.0000" stop-color="#c5deeb"/><stop offset="0.0476" stop-color="#c5deeb"/><stop offset="0.0952" stop-color="#c6dfeb"/><stop offset="0.1429" stop-color="#c7e0ec"/><stop offset="0.1905" stop-color="#c9e1ec"/><stop offset="0.2381" stop-color="#cbe3ed"/><stop offset="0.2857" stop-color="#cde5ed"/><stop offset="0.3333" stop-color="#d1e9ef"/><stop offset="0.3810" stop-color="#d5ecf1"/><stop offset="0.4286" stop-color="#d8f0f4"/><stop offset="0.4762" stop-color="#dcf4f6"/><stop offset="0.5238" stop-color="#dcf2f4"/><stop offset="0.5714" stop-color="#d9eeef"/><stop offset="0.6190" stop-color="#d5e8e8"/><stop offset="0.6667" stop-color="#c9dbdb"/><stop offset="0.7143" stop-color="#becdcd"/><stop offset="0.7619" stop-color="#b2bfbf"/><stop offset="0.8254" stop-color="#a1acac"/><stop offset="0.8413" stop-color="#9ca6a6"/><stop offset="0.8571" stop-color="#98a1a1"/><stop offset="0.8730" stop-color="#939b9c"/><stop offset="0.8889" stop-color="#8f9697"/><stop offset="0.9048" stop-color="#8b9192"/><stop offset="0.9206" stop-color="#868a8b"/><stop offset="0.9365" stop-color="#808383"/><stop offset="0.9524" stop-color="#747270"/><stop offset="0.9683" stop-color="#6c6865"/><stop offset="0.9841" stop-color="#6b6764"/><stop offset="1.0000" stop-color="#6a6662"/></linearGradient><linearGradient id="sk30" gradientUnits="userSpaceOnUse" x1="0" y1="53.67" x2="0" y2="116.67"><stop offset="0.0000" stop-color="#c5deeb"/><stop offset="0.0476" stop-color="#c6dfec"/><stop offset="0.0952" stop-color="#c6dfec"/><stop offset="0.1429" stop-color="#c8e0ec"/><stop offset="0.1905" stop-color="#c9e2ed"/><stop offset="0.2381" stop-color="#cbe4ed"/><stop offset="0.2857" stop-color="#cee6ee"/><stop offset="0.3333" stop-color="#d1eaf0"/><stop offset="0.3810" stop-color="#d5edf2"/><stop offset="0.4286" stop-color="#d9f1f4"/><stop offset="0.4762" stop-color="#ddf4f6"/><stop offset="0.5238" stop-color="#dcf3f4"/><stop offset="0.5714" stop-color="#daefef"/><stop offset="0.6190" stop-color="#d5e9e9"/><stop offset="0.6667" stop-color="#cadbdb"/><stop offset="0.7143" stop-color="#becece"/><stop offset="0.7619" stop-color="#b2bfbf"/><stop offset="0.8254" stop-color="#a1acac"/><stop offset="0.8413" stop-color="#9ca6a6"/><stop offset="0.8571" stop-color="#98a1a1"/><stop offset="0.8730" stop-color="#939b9c"/><stop offset="0.8889" stop-color="#8f9697"/><stop offset="0.9048" stop-color="#8b9192"/><stop offset="0.9206" stop-color="#868a8b"/><stop offset="0.9365" stop-color="#808383"/><stop offset="0.9524" stop-color="#747270"/><stop offset="0.9683" stop-color="#6c6865"/><stop offset="0.9841" stop-color="#6b6764"/><stop offset="1.0000" stop-color="#6a6662"/></linearGradient><linearGradient id="sk31" gradientUnits="userSpaceOnUse" x1="0" y1="53.57" x2="0" y2="116.57"><stop offset="0.0000" stop-color="#c6dfec"/><stop offset="0.0476" stop-color="#c6dfec"/><stop offset="0.0952" stop-color="#c7e0ec"/><stop offset="0.1429" stop-color="#c8e1ed"/><stop offset="0.1905" stop-color="#cae3ed"/><stop offset="0.2381" stop-color="#cce5ee"/><stop offset="0.2857" stop-color="#cee7ef"/><stop offset="0.3333" stop-color="#d2ebf1"/><stop offset="0.3810" stop-color="#d6eef2"/><stop offset="0.4286" stop-color="#daf1f5"/><stop offset="0.4762" stop-color="#ddf5f7"/><stop offset="0.5238" stop-color="#ddf3f4"/><stop offset="0.5714" stop-color="#daeff0"/><stop offset="0.6190" stop-color="#d6e9e9"/><stop offset="0.6667" stop-color="#cadcdc"/><stop offset="0.7143" stop-color="#becece"/><stop offset="0.7619" stop-color="#b2bfbf"/><stop offset="0.8254" stop-color="#a1acac"/><stop offset="0.8413" stop-color="#9ca6a6"/><stop offset="0.8571" stop-color="#98a1a1"/><stop offset="0.8730" stop-color="#939b9c"/><stop offset="0.8889" stop-color="#8f9697"/><stop offset="0.9048" stop-color="#8b9192"/><stop offset="0.9206" stop-color="#868b8c"/><stop offset="0.9365" stop-color="#808383"/><stop offset="0.9524" stop-color="#747270"/><stop offset="0.9683" stop-color="#6c6865"/><stop offset="0.9841" stop-color="#6b6764"/><stop offset="1.0000" stop-color="#6a6662"/></linearGradient><linearGradient id="sk32" gradientUnits="userSpaceOnUse" x1="0" y1="53.48" x2="0" y2="116.48"><stop offset="0.0000" stop-color="#c6dfec"/><stop offset="0.0476" stop-color="#c7e0ed"/><stop offset="0.0952" stop-color="#c7e0ed"/><stop offset="0.1429" stop-color="#c9e2ed"/><stop offset="0.1905" stop-color="#cbe4ee"/><stop offset="0.2381" stop-color="#cde6ee"/><stop offset="0.2857" stop-color="#cfe8ef"/><stop offset="0.3333" stop-color="#d3ebf1"/><stop offset="0.3810" stop-color="#d7eff3"/><stop offset="0.4286" stop-color="#daf2f5"/><stop offset="0.4762" stop-color="#def5f7"/><stop offset="0.5238" stop-color="#ddf4f5"/><stop offset="0.5714" stop-color="#dbf0f0"/><stop offset="0.6190" stop-color="#d6eaea"/><stop offset="0.6667" stop-color="#cadcdc"/><stop offset="0.7143" stop-color="#bfcece"/><stop offset="0.7619" stop-color="#b2bfbf"/><stop offset="0.8254" stop-color="#a0acac"/><stop offset="0.8413" stop-color="#9ca6a6"/><stop offset="0.8571" stop-color="#98a1a1"/><stop offset="0.8730" stop-color="#939c9c"/><stop offset="0.8889" stop-color="#8f9697"/><stop offset="0.9048" stop-color="#8b9192"/><stop offset="0.9206" stop-color="#868b8c"/><stop offset="0.9365" stop-color="#808383"/><stop offset="0.9524" stop-color="#747270"/><stop offset="0.9683" stop-color="#6c6865"/><stop offset="0.9841" stop-color="#6b6764"/><stop offset="1.0000" stop-color="#6a6662"/></linearGradient><linearGradient id="sk33" gradientUnits="userSpaceOnUse" x1="0" y1="53.39" x2="0" y2="116.39"><stop offset="0.0000" stop-color="#c7e0ed"/><stop offset="0.0476" stop-color="#c7e0ed"/><stop offset="0.0952" stop-color="#c8e1ed"/><stop offset="0.1429" stop-color="#c9e2ee"/><stop offset="0.1905" stop-color="#cbe4ee"/><stop offset="0.2381" stop-color="#cee7ef"/><stop offset="0.2857" stop-color="#d0e9f0"/><stop offset="0.3333" stop-color="#d4ecf2"/><stop offset="0.3810" stop-color="#d7eff4"/><stop offset="0.4286" stop-color="#dbf3f6"/><stop offset="0.4762" stop-color="#dff6f8"/><stop offset="0.5238" stop-color="#ddf4f5"/><stop offset="0.5714" stop-color="#dbf0f1"/><stop offset="0.6190" stop-color="#d7eaea"/><stop offset="0.6667" stop-color="#cbdcdc"/><stop offset="0.7143" stop-color="#bfcfcf"/><stop offset="0.7619" stop-color="#b2c0c0"/><stop offset="0.8254" stop-color="#a0acac"/><stop offset="0.8413" stop-color="#9ca6a6"/><stop offset="0.8571" stop-color="#98a1a1"/><stop offset="0.8730" stop-color="#939c9c"/><stop offset="0.8889" stop-color="#8f9697"/><stop offset="0.9048" stop-color="#8b9192"/><stop offset="0.9206" stop-color="#868b8c"/><stop offset="0.9365" stop-color="#808383"/><stop offset="0.9524" stop-color="#747270"/><stop offset="0.9683" stop-color="#6c6865"/><stop offset="0.9841" stop-color="#6b6764"/><stop offset="1.0000" stop-color="#6a6662"/></linearGradient><linearGradient id="sk34" gradientUnits="userSpaceOnUse" x1="0" y1="53.31" x2="0" y2="116.31"><stop offset="0.0000" stop-color="#c7e0ed"/><stop offset="0.0476" stop-color="#c8e1ee"/><stop offset="0.0952" stop-color="#c8e2ee"/><stop offset="0.1429" stop-color="#cae3ee"/><stop offset="0.1905" stop-color="#cce5ef"/><stop offset="0.2381" stop-color="#cee7f0"/><stop offset="0.2857" stop-color="#d1eaf1"/><stop offset="0.3333" stop-color="#d4edf2"/><stop offset="0.3810" stop-color="#d8f0f4"/><stop offset="0.4286" stop-color="#dcf3f6"/><stop offset="0.4762" stop-color="#dff6f8"/><stop offset="0.5238" stop-color="#def4f5"/><stop offset="0.5714" stop-color="#dcf1f1"/><stop offset="0.6190" stop-color="#d7ebeb"/><stop offset="0.6667" stop-color="#cbdddd"/><stop offset="0.7143" stop-color="#bfcfcf"/><stop offset="0.7619" stop-color="#b2c0c0"/><stop offset="0.8254" stop-color="#a0acac"/><stop offset="0.8413" stop-color="#9ca6a6"/><stop offset="0.8571" stop-color="#98a1a1"/><stop offset="0.8730" stop-color="#939c9c"/><stop offset="0.8889" stop-color="#8f9697"/><stop offset="0.9048" stop-color="#8b9192"/><stop offset="0.9206" stop-color="#868b8c"/><stop offset="0.9365" stop-color="#808384"/><stop offset="0.9524" stop-color="#747270"/><stop offset="0.9683" stop-color="#6c6865"/><stop offset="0.9841" stop-color="#6b6764"/><stop offset="1.0000" stop-color="#6a6662"/></linearGradient><linearGradient id="sk35" gradientUnits="userSpaceOnUse" x1="0" y1="53.23" x2="0" y2="116.23"><stop offset="0.0000" stop-color="#c8e1ee"/><stop offset="0.0476" stop-color="#c8e2ee"/><stop offset="0.0952" stop-color="#c9e2ee"/><stop offset="0.1429" stop-color="#cae4ef"/><stop offset="0.1905" stop-color="#cde6ef"/><stop offset="0.2381" stop-color="#cfe8f0"/><stop offset="0.2857" stop-color="#d2ebf1"/><stop offset="0.3333" stop-color="#d5eef3"/><stop offset="0.3810" stop-color="#d9f1f5"/><stop offset="0.4286" stop-color="#dcf4f7"/><stop offset="0.4762" stop-color="#e0f7f9"/><stop offset="0.5238" stop-color="#def5f6"/><stop offset="0.5714" stop-color="#dcf1f2"/><stop offset="0.6190" stop-color="#d7ebeb"/><stop offset="0.6667" stop-color="#cbdddd"/><stop offset="0.7143" stop-color="#bfcfcf"/><stop offset="0.7619" stop-color="#b2c0c0"/><stop offset="0.8254" stop-color="#a0acac"/><stop offset="0.8413" stop-color="#9ca6a6"/><stop offset="0.8571" stop-color="#98a1a1"/><stop offset="0.8730" stop-color="#939c9c"/><stop offset="0.8889" stop-color="#8f9697"/><stop offset="0.9048" stop-color="#8b9192"/><stop offset="0.9206" stop-color="#868b8d"/><stop offset="0.9365" stop-color="#808384"/><stop offset="0.9524" stop-color="#747270"/><stop offset="0.9683" stop-color="#6c6865"/><stop offset="0.9841" stop-color="#6b6764"/><stop offset="1.0000" stop-color="#6a6662"/></linearGradient><linearGradient id="sk36" gradientUnits="userSpaceOnUse" x1="0" y1="53.15" x2="0" y2="116.15"><stop offset="0.0000" stop-color="#c8e2ee"/><stop offset="0.0476" stop-color="#c9e2ee"/><stop offset="0.0952" stop-color="#c9e3ef"/><stop offset="0.1429" stop-color="#cbe4ef"/><stop offset="0.1905" stop-color="#cde7f0"/><stop offset="0.2381" stop-color="#d0e9f1"/><stop offset="0.2857" stop-color="#d2ecf2"/><stop offset="0.3333" stop-color="#d6eff4"/><stop offset="0.3810" stop-color="#d9f2f5"/><stop offset="0.4286" stop-color="#ddf5f7"/><stop offset="0.4762" stop-color="#e0f8f9"/><stop offset="0.5238" stop-color="#dff5f6"/><stop offset="0.5714" stop-color="#dcf2f2"/><stop offset="0.6190" stop-color="#d8ecec"/><stop offset="0.6667" stop-color="#ccdede"/><stop offset="0.7143" stop-color="#bfd0d0"/><stop offset="0.7619" stop-color="#b2c0c0"/><stop offset="0.8254" stop-color="#a0acac"/><stop offset="0.8413" stop-color="#9ca6a7"/><stop offset="0.8571" stop-color="#98a1a2"/><stop offset="0.8730" stop-color="#939c9d"/><stop offset="0.8889" stop-color="#8f9698"/><stop offset="0.9048" stop-color="#8b9193"/><stop offset="0.9206" stop-color="#878b8d"/><stop offset="0.9365" stop-color="#808384"/><stop offset="0.9524" stop-color="#747270"/><stop offset="0.9683" stop-color="#6c6865"/><stop offset="0.9841" stop-color="#6b6764"/><stop offset="1.0000" stop-color="#6a6662"/></linearGradient><linearGradient id="sk37" gradientUnits="userSpaceOnUse" x1="0" y1="53.08" x2="0" y2="116.08"><stop offset="0.0000" stop-color="#c9e2ef"/><stop offset="0.0476" stop-color="#c9e3ef"/><stop offset="0.0952" stop-color="#cae3ef"/><stop offset="0.1429" stop-color="#cbe5f0"/><stop offset="0.1905" stop-color="#cee7f1"/><stop offset="0.2381" stop-color="#d0eaf2"/><stop offset="0.2857" stop-color="#d3edf2"/><stop offset="0.3333" stop-color="#d7f0f4"/><stop offset="0.3810" stop-color="#daf2f6"/><stop offset="0.4286" stop-color="#def5f8"/><stop offset="0.4762" stop-color="#e1f8fa"/><stop offset="0.5238" stop-color="#dff6f7"/><stop offset="0.5714" stop-color="#ddf2f3"/><stop offset="0.6190" stop-color="#d8ecec"/><stop offset="0.6667" stop-color="#ccdede"/><stop offset="0.7143" stop-color="#c0d0d0"/><stop offset="0.7619" stop-color="#b2c1c1"/><stop offset="0.8254" stop-color="#a0acac"/><stop offset="0.8413" stop-color="#9ca6a7"/><stop offset="0.8571" stop-color="#98a1a2"/><stop offset="0.8730" stop-color="#939c9d"/><stop offset="0.8889" stop-color="#8f9698"/><stop offset="0.9048" stop-color="#8b9193"/><stop offset="0.9206" stop-color="#878b8d"/><stop offset="0.9365" stop-color="#808384"/><stop offset="0.9524" stop-color="#747270"/><stop offset="0.9683" stop-color="#6c6865"/><stop offset="0.9841" stop-color="#6b6764"/><stop offset="1.0000" stop-color="#6a6662"/></linearGradient><linearGradient id="sk38" gradientUnits="userSpaceOnUse" x1="0" y1="53.01" x2="0" y2="116.01"><stop offset="0.0000" stop-color="#c9e3ef"/><stop offset="0.0476" stop-color="#cae3ef"/><stop offset="0.0952" stop-color="#cae4f0"/><stop offset="0.1429" stop-color="#cce5f0"/><stop offset="0.1905" stop-color="#cee8f1"/><stop offset="0.2381" stop-color="#d1ebf2"/><stop offset="0.2857" stop-color="#d4edf3"/><stop offset="0.3333" stop-color="#d7f0f5"/><stop offset="0.3810" stop-color="#dbf3f6"/><stop offset="0.4286" stop-color="#def6f8"/><stop offset="0.4762" stop-color="#e2f9fa"/><stop offset="0.5238" stop-color="#e0f6f7"/><stop offset="0.5714" stop-color="#ddf3f3"/><stop offset="0.6190" stop-color="#d9eded"/><stop offset="0.6667" stop-color="#ccdfdf"/><stop offset="0.7143" stop-color="#c0d0d0"/><stop offset="0.7619" stop-color="#b2c1c1"/><stop offset="0.8254" stop-color="#a0acac"/><stop offset="0.8413" stop-color="#9ca6a7"/><stop offset="0.8571" stop-color="#97a1a2"/><stop offset="0.8730" stop-color="#939c9d"/><stop offset="0.8889" stop-color="#8f9798"/><stop offset="0.9048" stop-color="#8b9193"/><stop offset="0.9206" stop-color="#878c8d"/><stop offset="0.9365" stop-color="#818384"/><stop offset="0.9524" stop-color="#747270"/><stop offset="0.9683" stop-color="#6c6865"/><stop offset="0.9841" stop-color="#6b6764"/><stop offset="1.0000" stop-color="#6a6662"/></linearGradient><linearGradient id="sk39" gradientUnits="userSpaceOnUse" x1="0" y1="52.95" x2="0" y2="115.95"><stop offset="0.0000" stop-color="#cae3f0"/><stop offset="0.0476" stop-color="#cae4f0"/><stop offset="0.0952" stop-color="#cbe5f0"/><stop offset="0.1429" stop-color="#cce6f1"/><stop offset="0.1905" stop-color="#cfe9f2"/><stop offset="0.2381" stop-color="#d2ecf3"/><stop offset="0.2857" stop-color="#d5eef4"/><stop offset="0.3333" stop-color="#d8f1f5"/><stop offset="0.3810" stop-color="#dbf4f7"/><stop offset="0.4286" stop-color="#dff7f9"/><stop offset="0.4762" stop-color="#e2f9fb"/><stop offset="0.5238" stop-color="#e0f7f7"/><stop offset="0.5714" stop-color="#def3f3"/><stop offset="0.6190" stop-color="#d9eded"/><stop offset="0.6667" stop-color="#cddfdf"/><stop offset="0.7143" stop-color="#c0d1d1"/><stop offset="0.7619" stop-color="#b2c1c1"/><stop offset="0.8254" stop-color="#a0acac"/><stop offset="0.8413" stop-color="#9ba6a7"/><stop offset="0.8571" stop-color="#97a1a2"/><stop offset="0.8730" stop-color="#939c9d"/><stop offset="0.8889" stop-color="#8f9798"/><stop offset="0.9048" stop-color="#8b9193"/><stop offset="0.9206" stop-color="#878c8d"/><stop offset="0.9365" stop-color="#818384"/><stop offset="0.9524" stop-color="#747270"/><stop offset="0.9683" stop-color="#6c6865"/><stop offset="0.9841" stop-color="#6b6764"/><stop offset="1.0000" stop-color="#6a6662"/></linearGradient><linearGradient id="sk40" gradientUnits="userSpaceOnUse" x1="0" y1="52.89" x2="0" y2="115.89"><stop offset="0.0000" stop-color="#cae4f0"/><stop offset="0.0476" stop-color="#cbe5f0"/><stop offset="0.0952" stop-color="#cbe5f1"/><stop offset="0.1429" stop-color="#cde7f1"/><stop offset="0.1905" stop-color="#d0eaf2"/><stop offset="0.2381" stop-color="#d3ecf3"/><stop offset="0.2857" stop-color="#d5eff4"/><stop offset="0.3333" stop-color="#d9f2f6"/><stop offset="0.3810" stop-color="#dcf5f8"/><stop offset="0.4286" stop-color="#dff7f9"/><stop offset="0.4762" stop-color="#e3fafb"/><stop offset="0.5238" stop-color="#e1f7f8"/><stop offset="0.5714" stop-color="#def4f4"/><stop offset="0.6190" stop-color="#daeeee"/><stop offset="0.6667" stop-color="#cde0e0"/><stop offset="0.7143" stop-color="#c0d1d1"/><stop offset="0.7619" stop-color="#b2c1c1"/><stop offset="0.8254" stop-color="#a0acac"/><stop offset="0.8413" stop-color="#9ba6a7"/><stop offset="0.8571" stop-color="#97a1a2"/><stop offset="0.8730" stop-color="#939c9d"/><stop offset="0.8889" stop-color="#8f9798"/><stop offset="0.9048" stop-color="#8b9193"/><stop offset="0.9206" stop-color="#878c8e"/><stop offset="0.9365" stop-color="#818384"/><stop offset="0.9524" stop-color="#747270"/><stop offset="0.9683" stop-color="#6c6865"/><stop offset="0.9841" stop-color="#6b6764"/><stop offset="1.0000" stop-color="#6a6662"/></linearGradient><linearGradient id="sk41" gradientUnits="userSpaceOnUse" x1="0" y1="52.83" x2="0" y2="115.83"><stop offset="0.0000" stop-color="#cbe4f1"/><stop offset="0.0476" stop-color="#cbe5f1"/><stop offset="0.0952" stop-color="#cce6f1"/><stop offset="0.1429" stop-color="#cde7f2"/><stop offset="0.1905" stop-color="#d0eaf3"/><stop offset="0.2381" stop-color="#d3edf4"/><stop offset="0.2857" stop-color="#d6f0f5"/><stop offset="0.3333" stop-color="#d9f3f6"/><stop offset="0.3810" stop-color="#ddf5f8"/><stop offset="0.4286" stop-color="#e0f8fa"/><stop offset="0.4762" stop-color="#e3fafc"/><stop offset="0.5238" stop-color="#e1f7f8"/><stop offset="0.5714" stop-color="#dff4f4"/><stop offset="0.6190" stop-color="#daefef"/><stop offset="0.6667" stop-color="#cde0e0"/><stop offset="0.7143" stop-color="#c1d2d2"/><stop offset="0.7619" stop-color="#b2c1c1"/><stop offset="0.8254" stop-color="#a0acac"/><stop offset="0.8413" stop-color="#9ba6a7"/><stop offset="0.8571" stop-color="#97a1a2"/><stop offset="0.8730" stop-color="#939c9d"/><stop offset="0.8889" stop-color="#8f9798"/><stop offset="0.9048" stop-color="#8b9293"/><stop offset="0.9206" stop-color="#878c8e"/><stop offset="0.9365" stop-color="#818384"/><stop offset="0.9524" stop-color="#747270"/><stop offset="0.9683" stop-color="#6c6865"/><stop offset="0.9841" stop-color="#6b6764"/><stop offset="1.0000" stop-color="#6a6662"/></linearGradient><linearGradient id="sk42" gradientUnits="userSpaceOnUse" x1="0" y1="52.78" x2="0" y2="115.78"><stop offset="0.0000" stop-color="#cbe5f1"/><stop offset="0.0476" stop-color="#cce6f1"/><stop offset="0.0952" stop-color="#cce6f2"/><stop offset="0.1429" stop-color="#cee8f2"/><stop offset="0.1905" stop-color="#d1ebf3"/><stop offset="0.2381" stop-color="#d4eef5"/><stop offset="0.2857" stop-color="#d7f1f6"/><stop offset="0.3333" stop-color="#daf4f7"/><stop offset="0.3810" stop-color="#ddf6f9"/><stop offset="0.4286" stop-color="#e1f9fa"/><stop offset="0.4762" stop-color="#e4fbfc"/><stop offset="0.5238" stop-color="#e2f8f8"/><stop offset="0.5714" stop-color="#dff5f5"/><stop offset="0.6190" stop-color="#daefef"/><stop offset="0.6667" stop-color="#cee1e1"/><stop offset="0.7143" stop-color="#c1d2d2"/><stop offset="0.7619" stop-color="#b3c2c2"/><stop offset="0.8254" stop-color="#9facac"/><stop offset="0.8413" stop-color="#9ba6a7"/><stop offset="0.8571" stop-color="#97a1a2"/><stop offset="0.8730" stop-color="#939c9d"/><stop offset="0.8889" stop-color="#8f9798"/><stop offset="0.9048" stop-color="#8c9293"/><stop offset="0.9206" stop-color="#878c8e"/><stop offset="0.9365" stop-color="#818384"/><stop offset="0.9524" stop-color="#747270"/><stop offset="0.9683" stop-color="#6c6865"/><stop offset="0.9841" stop-color="#6b6764"/><stop offset="1.0000" stop-color="#6a6662"/></linearGradient><linearGradient id="sk43" gradientUnits="userSpaceOnUse" x1="0" y1="52.73" x2="0" y2="115.73"><stop offset="0.0000" stop-color="#cce6f1"/><stop offset="0.0476" stop-color="#cde7f2"/><stop offset="0.0952" stop-color="#cde7f2"/><stop offset="0.1429" stop-color="#cfe9f3"/><stop offset="0.1905" stop-color="#d2ecf4"/><stop offset="0.2381" stop-color="#d5eff5"/><stop offset="0.2857" stop-color="#d8f2f6"/><stop offset="0.3333" stop-color="#dbf4f7"/><stop offset="0.3810" stop-color="#def6f9"/><stop offset="0.4286" stop-color="#e2f9fb"/><stop offset="0.4762" stop-color="#e5fbfc"/><stop offset="0.5238" stop-color="#e3f8f9"/><stop offset="0.5714" stop-color="#e0f5f5"/><stop offset="0.6190" stop-color="#dbf0f0"/><stop offset="0.6667" stop-color="#cee1e1"/><stop offset="0.7143" stop-color="#c1d2d2"/><stop offset="0.7619" stop-color="#b3c2c2"/><stop offset="0.8254" stop-color="#a0acac"/><stop offset="0.8413" stop-color="#9ca7a7"/><stop offset="0.8571" stop-color="#98a2a2"/><stop offset="0.8730" stop-color="#949c9d"/><stop offset="0.8889" stop-color="#909798"/><stop offset="0.9048" stop-color="#8c9294"/><stop offset="0.9206" stop-color="#878c8e"/><stop offset="0.9365" stop-color="#818484"/><stop offset="0.9524" stop-color="#747270"/><stop offset="0.9683" stop-color="#6c6865"/><stop offset="0.9841" stop-color="#6b6764"/><stop offset="1.0000" stop-color="#6a6662"/></linearGradient><linearGradient id="sk44" gradientUnits="userSpaceOnUse" x1="0" y1="52.69" x2="0" y2="115.69"><stop offset="0.0000" stop-color="#cde6f2"/><stop offset="0.0476" stop-color="#cde7f2"/><stop offset="0.0952" stop-color="#cee8f3"/><stop offset="0.1429" stop-color="#d0e9f3"/><stop offset="0.1905" stop-color="#d3ecf4"/><stop offset="0.2381" stop-color="#d6eff5"/><stop offset="0.2857" stop-color="#d9f2f6"/><stop offset="0.3333" stop-color="#dcf5f8"/><stop offset="0.3810" stop-color="#dff7f9"/><stop offset="0.4286" stop-color="#e3f9fb"/><stop offset="0.4762" stop-color="#e6fbfc"/><stop offset="0.5238" stop-color="#e4f9f9"/><stop offset="0.5714" stop-color="#e1f6f6"/><stop offset="0.6190" stop-color="#dcf0f0"/><stop offset="0.6667" stop-color="#cee1e1"/><stop offset="0.7143" stop-color="#c1d3d3"/><stop offset="0.7619" stop-color="#b3c2c2"/><stop offset="0.8254" stop-color="#a0adad"/><stop offset="0.8413" stop-color="#9ca7a8"/><stop offset="0.8571" stop-color="#98a2a3"/><stop offset="0.8730" stop-color="#949d9e"/><stop offset="0.8889" stop-color="#909799"/><stop offset="0.9048" stop-color="#8c9294"/><stop offset="0.9206" stop-color="#878c8e"/><stop offset="0.9365" stop-color="#818484"/><stop offset="0.9524" stop-color="#747270"/><stop offset="0.9683" stop-color="#6c6865"/><stop offset="0.9841" stop-color="#6b6764"/><stop offset="1.0000" stop-color="#6a6662"/></linearGradient><linearGradient id="sk45" gradientUnits="userSpaceOnUse" x1="0" y1="52.65" x2="0" y2="115.65"><stop offset="0.0000" stop-color="#cde7f2"/><stop offset="0.0476" stop-color="#cee8f3"/><stop offset="0.0952" stop-color="#cfe9f3"/><stop offset="0.1429" stop-color="#d1eaf4"/><stop offset="0.1905" stop-color="#d3edf5"/><stop offset="0.2381" stop-color="#d6f0f6"/><stop offset="0.2857" stop-color="#d9f3f7"/><stop offset="0.3333" stop-color="#ddf5f8"/><stop offset="0.3810" stop-color="#e0f7fa"/><stop offset="0.4286" stop-color="#e4f9fb"/><stop offset="0.4762" stop-color="#e7fcfc"/><stop offset="0.5238" stop-color="#e5f9f9"/><stop offset="0.5714" stop-color="#e2f6f6"/><stop offset="0.6190" stop-color="#ddf0f0"/><stop offset="0.6667" stop-color="#cfe2e2"/><stop offset="0.7143" stop-color="#c2d3d3"/><stop offset="0.7619" stop-color="#b4c3c3"/><stop offset="0.8254" stop-color="#a1adad"/><stop offset="0.8413" stop-color="#9da8a8"/><stop offset="0.8571" stop-color="#99a2a3"/><stop offset="0.8730" stop-color="#949d9e"/><stop offset="0.8889" stop-color="#909899"/><stop offset="0.9048" stop-color="#8c9294"/><stop offset="0.9206" stop-color="#888d8e"/><stop offset="0.9365" stop-color="#818484"/><stop offset="0.9524" stop-color="#747270"/><stop offset="0.9683" stop-color="#6c6865"/><stop offset="0.9841" stop-color="#6b6764"/><stop offset="1.0000" stop-color="#6a6662"/></linearGradient><linearGradient id="sk46" gradientUnits="userSpaceOnUse" x1="0" y1="52.61" x2="0" y2="115.61"><stop offset="0.0000" stop-color="#cee8f3"/><stop offset="0.0476" stop-color="#cfe9f3"/><stop offset="0.0952" stop-color="#d0eaf3"/><stop offset="0.1429" stop-color="#d1ebf4"/><stop offset="0.1905" stop-color="#d4eef5"/><stop offset="0.2381" stop-color="#d7f0f6"/><stop offset="0.2857" stop-color="#daf3f7"/><stop offset="0.3333" stop-color="#def6f9"/><stop offset="0.3810" stop-color="#e1f8fa"/><stop offset="0.4286" stop-color="#e5fafb"/><stop offset="0.4762" stop-color="#e8fcfd"/><stop offset="0.5238" stop-color="#e6f9fa"/><stop offset="0.5714" stop-color="#e3f6f7"/><stop offset="0.6190" stop-color="#def1f1"/><stop offset="0.6667" stop-color="#cfe2e2"/><stop offset="0.7143" stop-color="#c2d3d3"/><stop offset="0.7619" stop-color="#b4c3c3"/><stop offset="0.8254" stop-color="#a1adad"/><stop offset="0.8413" stop-color="#9da8a8"/><stop offset="0.8571" stop-color="#99a3a3"/><stop offset="0.8730" stop-color="#959d9e"/><stop offset="0.8889" stop-color="#919899"/><stop offset="0.9048" stop-color="#8c9394"/><stop offset="0.9206" stop-color="#888d8e"/><stop offset="0.9365" stop-color="#818484"/><stop offset="0.9524" stop-color="#747270"/><stop offset="0.9683" stop-color="#6c6865"/><stop offset="0.9841" stop-color="#6b6764"/><stop offset="1.0000" stop-color="#6a6662"/></linearGradient><linearGradient id="sk47" gradientUnits="userSpaceOnUse" x1="0" y1="52.58" x2="0" y2="115.58"><stop offset="0.0000" stop-color="#cfe9f3"/><stop offset="0.0476" stop-color="#d0eaf3"/><stop offset="0.0952" stop-color="#d1eaf4"/><stop offset="0.1429" stop-color="#d2ecf4"/><stop offset="0.1905" stop-color="#d5eef5"/><stop offset="0.2381" stop-color="#d8f1f7"/><stop offset="0.2857" stop-color="#dbf4f8"/><stop offset="0.3333" stop-color="#dff6f9"/><stop offset="0.3810" stop-color="#e2f8fa"/><stop offset="0.4286" stop-color="#e6fafb"/><stop offset="0.4762" stop-color="#e9fcfd"/><stop offset="0.5238" stop-color="#e7fafa"/><stop offset="0.5714" stop-color="#e4f7f7"/><stop offset="0.6190" stop-color="#def1f1"/><stop offset="0.6667" stop-color="#d0e2e2"/><stop offset="0.7143" stop-color="#c3d4d4"/><stop offset="0.7619" stop-color="#b5c4c4"/><stop offset="0.8254" stop-color="#a2aeae"/><stop offset="0.8413" stop-color="#9ea9a9"/><stop offset="0.8571" stop-color="#99a3a4"/><stop offset="0.8730" stop-color="#959e9f"/><stop offset="0.8889" stop-color="#91989a"/><stop offset="0.9048" stop-color="#8c9394"/><stop offset="0.9206" stop-color="#888d8e"/><stop offset="0.9365" stop-color="#818484"/><stop offset="0.9524" stop-color="#747270"/><stop offset="0.9683" stop-color="#6c6865"/><stop offset="0.9841" stop-color="#6b6764"/><stop offset="1.0000" stop-color="#6a6662"/></linearGradient><linearGradient id="sk48" gradientUnits="userSpaceOnUse" x1="0" y1="52.55" x2="0" y2="115.55"><stop offset="0.0000" stop-color="#d0e9f4"/><stop offset="0.0476" stop-color="#d1eaf4"/><stop offset="0.0952" stop-color="#d2ebf4"/><stop offset="0.1429" stop-color="#d3ecf5"/><stop offset="0.1905" stop-color="#d6eff6"/><stop offset="0.2381" stop-color="#d9f2f7"/><stop offset="0.2857" stop-color="#dcf4f8"/><stop offset="0.3333" stop-color="#dff6f9"/><stop offset="0.3810" stop-color="#e3f8fa"/><stop offset="0.4286" stop-color="#e7fafc"/><stop offset="0.4762" stop-color="#eafcfd"/><stop offset="0.5238" stop-color="#e9fafb"/><stop offset="0.5714" stop-color="#e6f7f8"/><stop offset="0.6190" stop-color="#dff2f2"/><stop offset="0.6667" stop-color="#d0e3e3"/><stop offset="0.7143" stop-color="#c3d4d4"/><stop offset="0.7619" stop-color="#b5c4c4"/><stop offset="0.8254" stop-color="#a2aeae"/><stop offset="0.8413" stop-color="#9ea9a9"/><stop offset="0.8571" stop-color="#9aa4a4"/><stop offset="0.8730" stop-color="#959e9f"/><stop offset="0.8889" stop-color="#91999a"/><stop offset="0.9048" stop-color="#8d9395"/><stop offset="0.9206" stop-color="#888d8e"/><stop offset="0.9365" stop-color="#818484"/><stop offset="0.9524" stop-color="#747270"/><stop offset="0.9683" stop-color="#6c6865"/><stop offset="0.9841" stop-color="#6b6764"/><stop offset="1.0000" stop-color="#6a6662"/></linearGradient><linearGradient id="sk49" gradientUnits="userSpaceOnUse" x1="0" y1="52.52" x2="0" y2="115.52"><stop offset="0.0000" stop-color="#d1eaf4"/><stop offset="0.0476" stop-color="#d2ebf4"/><stop offset="0.0952" stop-color="#d2ecf5"/><stop offset="0.1429" stop-color="#d4edf5"/><stop offset="0.1905" stop-color="#d7f0f6"/><stop offset="0.2381" stop-color="#daf2f7"/><stop offset="0.2857" stop-color="#ddf5f9"/><stop offset="0.3333" stop-color="#e0f7fa"/><stop offset="0.3810" stop-color="#e4f9fb"/><stop offset="0.4286" stop-color="#e8fbfc"/><stop offset="0.4762" stop-color="#ebfcfd"/><stop offset="0.5238" stop-color="#eafafb"/><stop offset="0.5714" stop-color="#e7f8f8"/><stop offset="0.6190" stop-color="#e0f2f2"/><stop offset="0.6667" stop-color="#d0e3e3"/><stop offset="0.7143" stop-color="#c3d4d4"/><stop offset="0.7619" stop-color="#b6c4c4"/><stop offset="0.8254" stop-color="#a3afaf"/><stop offset="0.8413" stop-color="#9faaaa"/><stop offset="0.8571" stop-color="#9aa4a4"/><stop offset="0.8730" stop-color="#969f9f"/><stop offset="0.8889" stop-color="#91999a"/><stop offset="0.9048" stop-color="#8d9495"/><stop offset="0.9206" stop-color="#888d8f"/><stop offset="0.9365" stop-color="#818484"/><stop offset="0.9524" stop-color="#747270"/><stop offset="0.9683" stop-color="#6c6865"/><stop offset="0.9841" stop-color="#6b6764"/><stop offset="1.0000" stop-color="#6a6662"/></linearGradient><linearGradient id="sk50" gradientUnits="userSpaceOnUse" x1="0" y1="52.50" x2="0" y2="115.50"><stop offset="0.0000" stop-color="#d1ebf4"/><stop offset="0.0476" stop-color="#d2ecf5"/><stop offset="0.0952" stop-color="#d3edf5"/><stop offset="0.1429" stop-color="#d5eef6"/><stop offset="0.1905" stop-color="#d8f0f7"/><stop offset="0.2381" stop-color="#dbf3f8"/><stop offset="0.2857" stop-color="#def5f9"/><stop offset="0.3333" stop-color="#e1f7fa"/><stop offset="0.3810" stop-color="#e5f9fb"/><stop offset="0.4286" stop-color="#e9fbfc"/><stop offset="0.4762" stop-color="#ecfcfd"/><stop offset="0.5238" stop-color="#ebfbfb"/><stop offset="0.5714" stop-color="#e8f8f8"/><stop offset="0.6190" stop-color="#e1f3f3"/><stop offset="0.6667" stop-color="#d1e4e4"/><stop offset="0.7143" stop-color="#c4d5d5"/><stop offset="0.7619" stop-color="#b6c5c5"/><stop offset="0.8254" stop-color="#a3afaf"/><stop offset="0.8413" stop-color="#9faaaa"/><stop offset="0.8571" stop-color="#9aa4a5"/><stop offset="0.8730" stop-color="#969fa0"/><stop offset="0.8889" stop-color="#92999a"/><stop offset="0.9048" stop-color="#8d9495"/><stop offset="0.9206" stop-color="#888d8f"/><stop offset="0.9365" stop-color="#818484"/><stop offset="0.9524" stop-color="#747270"/><stop offset="0.9683" stop-color="#6c6865"/><stop offset="0.9841" stop-color="#6b6764"/><stop offset="1.0000" stop-color="#6a6662"/></linearGradient><linearGradient id="sk51" gradientUnits="userSpaceOnUse" x1="0" y1="52.48" x2="0" y2="115.48"><stop offset="0.0000" stop-color="#d2ecf5"/><stop offset="0.0476" stop-color="#d3edf5"/><stop offset="0.0952" stop-color="#d4edf6"/><stop offset="0.1429" stop-color="#d6eff6"/><stop offset="0.1905" stop-color="#d8f1f7"/><stop offset="0.2381" stop-color="#dbf3f8"/><stop offset="0.2857" stop-color="#def6f9"/><stop offset="0.3333" stop-color="#e2f8fa"/><stop offset="0.3810" stop-color="#e6fafb"/><stop offset="0.4286" stop-color="#eafbfc"/><stop offset="0.4762" stop-color="#edfdfd"/><stop offset="0.5238" stop-color="#ecfbfc"/><stop offset="0.5714" stop-color="#e9f9f9"/><stop offset="0.6190" stop-color="#e2f3f3"/><stop offset="0.6667" stop-color="#d1e4e4"/><stop offset="0.7143" stop-color="#c4d5d5"/><stop offset="0.7619" stop-color="#b6c5c5"/><stop offset="0.8254" stop-color="#a4b0b0"/><stop offset="0.8413" stop-color="#9faaab"/><stop offset="0.8571" stop-color="#9ba5a5"/><stop offset="0.8730" stop-color="#969fa0"/><stop offset="0.8889" stop-color="#929a9b"/><stop offset="0.9048" stop-color="#8d9495"/><stop offset="0.9206" stop-color="#888d8f"/><stop offset="0.9365" stop-color="#818484"/><stop offset="0.9524" stop-color="#747270"/><stop offset="0.9683" stop-color="#6c6865"/><stop offset="0.9841" stop-color="#6b6764"/><stop offset="1.0000" stop-color="#6a6662"/></linearGradient><linearGradient id="sk52" gradientUnits="userSpaceOnUse" x1="0" y1="52.47" x2="0" y2="115.47"><stop offset="0.0000" stop-color="#d3ecf5"/><stop offset="0.0476" stop-color="#d4edf6"/><stop offset="0.0952" stop-color="#d5eef6"/><stop offset="0.1429" stop-color="#d6eff6"/><stop offset="0.1905" stop-color="#d9f2f7"/><stop offset="0.2381" stop-color="#dcf4f9"/><stop offset="0.2857" stop-color="#dff6fa"/><stop offset="0.3333" stop-color="#e3f8fb"/><stop offset="0.3810" stop-color="#e7fafc"/><stop offset="0.4286" stop-color="#ebfcfc"/><stop offset="0.4762" stop-color="#eefdfd"/><stop offset="0.5238" stop-color="#edfcfc"/><stop offset="0.5714" stop-color="#eaf9f9"/><stop offset="0.6190" stop-color="#e3f4f4"/><stop offset="0.6667" stop-color="#d2e4e4"/><stop offset="0.7143" stop-color="#c5d5d5"/><stop offset="0.7619" stop-color="#b7c6c6"/><stop offset="0.8254" stop-color="#a4b0b0"/><stop offset="0.8413" stop-color="#a0abab"/><stop offset="0.8571" stop-color="#9ba5a6"/><stop offset="0.8730" stop-color="#97a0a0"/><stop offset="0.8889" stop-color="#929a9b"/><stop offset="0.9048" stop-color="#8d9496"/><stop offset="0.9206" stop-color="#888e8f"/><stop offset="0.9365" stop-color="#818484"/><stop offset="0.9524" stop-color="#747270"/><stop offset="0.9683" stop-color="#6c6865"/><stop offset="0.9841" stop-color="#6b6764"/><stop offset="1.0000" stop-color="#6a6662"/></linearGradient><linearGradient id="sk53" gradientUnits="userSpaceOnUse" x1="0" y1="52.46" x2="0" y2="115.46"><stop offset="0.0000" stop-color="#d4edf6"/><stop offset="0.0476" stop-color="#d5eef6"/><stop offset="0.0952" stop-color="#d6eff6"/><stop offset="0.1429" stop-color="#d7f0f7"/><stop offset="0.1905" stop-color="#daf2f8"/><stop offset="0.2381" stop-color="#ddf5f9"/><stop offset="0.2857" stop-color="#e0f7fa"/><stop offset="0.3333" stop-color="#e4f9fb"/><stop offset="0.3810" stop-color="#e8fafc"/><stop offset="0.4286" stop-color="#ecfcfd"/><stop offset="0.4762" stop-color="#effdfd"/><stop offset="0.5238" stop-color="#effcfc"/><stop offset="0.5714" stop-color="#ebfafa"/><stop offset="0.6190" stop-color="#e3f4f4"/><stop offset="0.6667" stop-color="#d2e5e5"/><stop offset="0.7143" stop-color="#c5d6d6"/><stop offset="0.7619" stop-color="#b7c6c6"/><stop offset="0.8254" stop-color="#a5b1b1"/><stop offset="0.8413" stop-color="#a0abab"/><stop offset="0.8571" stop-color="#9ca6a6"/><stop offset="0.8730" stop-color="#97a0a1"/><stop offset="0.8889" stop-color="#929a9b"/><stop offset="0.9048" stop-color="#8e9596"/><stop offset="0.9206" stop-color="#888e8f"/><stop offset="0.9365" stop-color="#818484"/><stop offset="0.9524" stop-color="#747270"/><stop offset="0.9683" stop-color="#6c6865"/><stop offset="0.9841" stop-color="#6b6764"/><stop offset="1.0000" stop-color="#6a6662"/></linearGradient><linearGradient id="sk54" gradientUnits="userSpaceOnUse" x1="0" y1="52.45" x2="0" y2="115.45"><stop offset="0.0000" stop-color="#d5eef6"/><stop offset="0.0476" stop-color="#d6eff6"/><stop offset="0.0952" stop-color="#d7f0f7"/><stop offset="0.1429" stop-color="#d8f1f7"/><stop offset="0.1905" stop-color="#dbf3f8"/><stop offset="0.2381" stop-color="#def5f9"/><stop offset="0.2857" stop-color="#e1f7fb"/><stop offset="0.3333" stop-color="#e5f9fc"/><stop offset="0.3810" stop-color="#e9fbfc"/><stop offset="0.4286" stop-color="#edfcfd"/><stop offset="0.4762" stop-color="#f0fdfe"/><stop offset="0.5238" stop-color="#f0fcfd"/><stop offset="0.5714" stop-color="#ecfafa"/><stop offset="0.6190" stop-color="#e4f4f4"/><stop offset="0.6667" stop-color="#d2e5e5"/><stop offset="0.7143" stop-color="#c5d6d6"/><stop offset="0.7619" stop-color="#b8c6c6"/><stop offset="0.8254" stop-color="#a5b1b1"/><stop offset="0.8413" stop-color="#a1acac"/><stop offset="0.8571" stop-color="#9ca6a6"/><stop offset="0.8730" stop-color="#97a0a1"/><stop offset="0.8889" stop-color="#939b9b"/><stop offset="0.9048" stop-color="#8e9596"/><stop offset="0.9206" stop-color="#888e8f"/><stop offset="0.9365" stop-color="#818484"/><stop offset="0.9524" stop-color="#747270"/><stop offset="0.9683" stop-color="#6c6865"/><stop offset="0.9841" stop-color="#6b6764"/><stop offset="1.0000" stop-color="#6a6662"/></linearGradient><linearGradient id="sk55" gradientUnits="userSpaceOnUse" x1="0" y1="52.45" x2="0" y2="115.45"><stop offset="0.0000" stop-color="#d5eff7"/><stop offset="0.0476" stop-color="#d6f0f7"/><stop offset="0.0952" stop-color="#d8f0f7"/><stop offset="0.1429" stop-color="#d9f2f8"/><stop offset="0.1905" stop-color="#dcf4f9"/><stop offset="0.2381" stop-color="#dff6fa"/><stop offset="0.2857" stop-color="#e2f8fb"/><stop offset="0.3333" stop-color="#e6fafc"/><stop offset="0.3810" stop-color="#eafbfc"/><stop offset="0.4286" stop-color="#eefcfd"/><stop offset="0.4762" stop-color="#f1fdfe"/><stop offset="0.5238" stop-color="#f1fdfd"/><stop offset="0.5714" stop-color="#edfbfb"/><stop offset="0.6190" stop-color="#e5f5f5"/><stop offset="0.6667" stop-color="#d3e6e6"/><stop offset="0.7143" stop-color="#c6d6d6"/><stop offset="0.7619" stop-color="#b8c7c7"/><stop offset="0.8254" stop-color="#a6b2b2"/><stop offset="0.8413" stop-color="#a1acac"/><stop offset="0.8571" stop-color="#9ca6a7"/><stop offset="0.8730" stop-color="#98a1a1"/><stop offset="0.8889" stop-color="#939b9c"/><stop offset="0.9048" stop-color="#8e9596"/><stop offset="0.9206" stop-color="#888e8f"/><stop offset="0.9365" stop-color="#818484"/><stop offset="0.9524" stop-color="#747270"/><stop offset="0.9683" stop-color="#6c6865"/><stop offset="0.9841" stop-color="#6b6764"/><stop offset="1.0000" stop-color="#6a6662"/></linearGradient><linearGradient id="sk56" gradientUnits="userSpaceOnUse" x1="0" y1="52.45" x2="0" y2="115.45"><stop offset="0.0000" stop-color="#d6eff7"/><stop offset="0.0476" stop-color="#d7f0f7"/><stop offset="0.0952" stop-color="#d8f1f8"/><stop offset="0.1429" stop-color="#daf2f8"/><stop offset="0.1905" stop-color="#ddf4f9"/><stop offset="0.2381" stop-color="#e0f6fa"/><stop offset="0.2857" stop-color="#e3f9fb"/><stop offset="0.3333" stop-color="#e7fafc"/><stop offset="0.3810" stop-color="#ebfbfd"/><stop offset="0.4286" stop-color="#effdfd"/><stop offset="0.4762" stop-color="#f1fefe"/><stop offset="0.5238" stop-color="#f2fdfd"/><stop offset="0.5714" stop-color="#eefbfb"/><stop offset="0.6190" stop-color="#e6f5f5"/><stop offset="0.6667" stop-color="#d3e6e6"/><stop offset="0.7143" stop-color="#c6d7d7"/><stop offset="0.7619" stop-color="#b8c7c7"/><stop offset="0.8254" stop-color="#a6b2b2"/><stop offset="0.8413" stop-color="#a2adad"/><stop offset="0.8571" stop-color="#9da7a7"/><stop offset="0.8730" stop-color="#98a1a2"/><stop offset="0.8889" stop-color="#939b9c"/><stop offset="0.9048" stop-color="#8e9596"/><stop offset="0.9206" stop-color="#888e8f"/><stop offset="0.9365" stop-color="#818484"/><stop offset="0.9524" stop-color="#747270"/><stop offset="0.9683" stop-color="#6c6865"/><stop offset="0.9841" stop-color="#6b6764"/><stop offset="1.0000" stop-color="#6a6662"/></linearGradient><linearGradient id="sk57" gradientUnits="userSpaceOnUse" x1="0" y1="52.46" x2="0" y2="115.46"><stop offset="0.0000" stop-color="#d7f0f7"/><stop offset="0.0476" stop-color="#d8f1f8"/><stop offset="0.0952" stop-color="#d9f2f8"/><stop offset="0.1429" stop-color="#dbf3f8"/><stop offset="0.1905" stop-color="#ddf5f9"/><stop offset="0.2381" stop-color="#e0f7fb"/><stop offset="0.2857" stop-color="#e3f9fc"/><stop offset="0.3333" stop-color="#e7fbfd"/><stop offset="0.3810" stop-color="#ecfcfd"/><stop offset="0.4286" stop-color="#f0fdfd"/><stop offset="0.4762" stop-color="#f2fefe"/><stop offset="0.5238" stop-color="#f3fefe"/><stop offset="0.5714" stop-color="#effcfc"/><stop offset="0.6190" stop-color="#e7f6f6"/><stop offset="0.6667" stop-color="#d4e6e6"/><stop offset="0.7143" stop-color="#c6d7d7"/><stop offset="0.7619" stop-color="#b9c7c7"/><stop offset="0.8254" stop-color="#a7b2b2"/><stop offset="0.8413" stop-color="#a2adad"/><stop offset="0.8571" stop-color="#9da7a8"/><stop offset="0.8730" stop-color="#98a1a2"/><stop offset="0.8889" stop-color="#939c9c"/><stop offset="0.9048" stop-color="#8e9697"/><stop offset="0.9206" stop-color="#898e8f"/><stop offset="0.9365" stop-color="#818484"/><stop offset="0.9524" stop-color="#747270"/><stop offset="0.9683" stop-color="#6c6865"/><stop offset="0.9841" stop-color="#6b6764"/><stop offset="1.0000" stop-color="#6a6662"/></linearGradient><linearGradient id="sk58" gradientUnits="userSpaceOnUse" x1="0" y1="52.47" x2="0" y2="115.47"><stop offset="0.0000" stop-color="#d8f1f8"/><stop offset="0.0476" stop-color="#d9f2f8"/><stop offset="0.0952" stop-color="#daf3f8"/><stop offset="0.1429" stop-color="#dbf4f9"/><stop offset="0.1905" stop-color="#def6fa"/><stop offset="0.2381" stop-color="#e1f8fb"/><stop offset="0.2857" stop-color="#e4fafc"/><stop offset="0.3333" stop-color="#e8fbfd"/><stop offset="0.3810" stop-color="#edfcfd"/><stop offset="0.4286" stop-color="#f1fdfe"/><stop offset="0.4762" stop-color="#f3fefe"/><stop offset="0.5238" stop-color="#f5fefe"/><stop offset="0.5714" stop-color="#f1fcfc"/><stop offset="0.6190" stop-color="#e7f6f6"/><stop offset="0.6667" stop-color="#d4e7e7"/><stop offset="0.7143" stop-color="#c7d7d7"/><stop offset="0.7619" stop-color="#b9c8c8"/><stop offset="0.8254" stop-color="#a7b3b3"/><stop offset="0.8413" stop-color="#a3aeae"/><stop offset="0.8571" stop-color="#9ea8a8"/><stop offset="0.8730" stop-color="#99a2a2"/><stop offset="0.8889" stop-color="#949c9d"/><stop offset="0.9048" stop-color="#8f9697"/><stop offset="0.9206" stop-color="#898e8f"/><stop offset="0.9365" stop-color="#818484"/><stop offset="0.9524" stop-color="#747270"/><stop offset="0.9683" stop-color="#6c6865"/><stop offset="0.9841" stop-color="#6b6764"/><stop offset="1.0000" stop-color="#6a6662"/></linearGradient><linearGradient id="sk59" gradientUnits="userSpaceOnUse" x1="0" y1="52.48" x2="0" y2="115.48"><stop offset="0.0000" stop-color="#d9f2f8"/><stop offset="0.0476" stop-color="#daf3f9"/><stop offset="0.0952" stop-color="#dbf4f9"/><stop offset="0.1429" stop-color="#dcf5f9"/><stop offset="0.1905" stop-color="#dff6fa"/><stop offset="0.2381" stop-color="#e2f8fb"/><stop offset="0.2857" stop-color="#e5fafd"/><stop offset="0.3333" stop-color="#e9fcfd"/><stop offset="0.3810" stop-color="#eefdfe"/><stop offset="0.4286" stop-color="#f3fefe"/><stop offset="0.4762" stop-color="#f4fefe"/><stop offset="0.5238" stop-color="#f6fefe"/><stop offset="0.5714" stop-color="#f2fdfd"/><stop offset="0.6190" stop-color="#e8f7f7"/><stop offset="0.6667" stop-color="#d5e7e7"/><stop offset="0.7143" stop-color="#c7d8d8"/><stop offset="0.7619" stop-color="#bac8c8"/><stop offset="0.8254" stop-color="#a8b3b3"/><stop offset="0.8413" stop-color="#a3aeae"/><stop offset="0.8571" stop-color="#9ea8a8"/><stop offset="0.8730" stop-color="#99a2a3"/><stop offset="0.8889" stop-color="#949c9d"/><stop offset="0.9048" stop-color="#8f9697"/><stop offset="0.9206" stop-color="#898f8f"/><stop offset="0.9365" stop-color="#818484"/><stop offset="0.9524" stop-color="#747270"/><stop offset="0.9683" stop-color="#6c6865"/><stop offset="0.9841" stop-color="#6b6764"/><stop offset="1.0000" stop-color="#6a6662"/></linearGradient><linearGradient id="sk60" gradientUnits="userSpaceOnUse" x1="0" y1="52.50" x2="0" y2="115.50"><stop offset="0.0000" stop-color="#d9f2f9"/><stop offset="0.0476" stop-color="#dbf3f9"/><stop offset="0.0952" stop-color="#dcf4f9"/><stop offset="0.1429" stop-color="#ddf5fa"/><stop offset="0.1905" stop-color="#e0f7fb"/><stop offset="0.2381" stop-color="#e3f9fc"/><stop offset="0.2857" stop-color="#e6fbfd"/><stop offset="0.3333" stop-color="#eafcfe"/><stop offset="0.3810" stop-color="#effdfe"/><stop offset="0.4286" stop-color="#f4fefe"/><stop offset="0.4762" stop-color="#f5fefe"/><stop offset="0.5238" stop-color="#f7ffff"/><stop offset="0.5714" stop-color="#f3fdfd"/><stop offset="0.6190" stop-color="#e9f7f7"/><stop offset="0.6667" stop-color="#d5e8e8"/><stop offset="0.7143" stop-color="#c8d8d8"/><stop offset="0.7619" stop-color="#bac9c9"/><stop offset="0.8254" stop-color="#a8b4b4"/><stop offset="0.8413" stop-color="#a4aeaf"/><stop offset="0.8571" stop-color="#9ea8a9"/><stop offset="0.8730" stop-color="#99a2a3"/><stop offset="0.8889" stop-color="#949c9d"/><stop offset="0.9048" stop-color="#8f9697"/><stop offset="0.9206" stop-color="#898f8f"/><stop offset="0.9365" stop-color="#818484"/><stop offset="0.9524" stop-color="#747270"/><stop offset="0.9683" stop-color="#6c6865"/><stop offset="0.9841" stop-color="#6b6764"/><stop offset="1.0000" stop-color="#6a6662"/></linearGradient><linearGradient id="sk61" gradientUnits="userSpaceOnUse" x1="0" y1="52.52" x2="0" y2="115.52"><stop offset="0.0000" stop-color="#daf3f9"/><stop offset="0.0476" stop-color="#dbf4f9"/><stop offset="0.0952" stop-color="#ddf5fa"/><stop offset="0.1429" stop-color="#def6fa"/><stop offset="0.1905" stop-color="#e1f8fb"/><stop offset="0.2381" stop-color="#e4f9fc"/><stop offset="0.2857" stop-color="#e7fbfd"/><stop offset="0.3333" stop-color="#ebfcfe"/><stop offset="0.3810" stop-color="#f0fdfe"/><stop offset="0.4286" stop-color="#f4fefe"/><stop offset="0.4762" stop-color="#f6ffff"/><stop offset="0.5238" stop-color="#f8ffff"/><stop offset="0.5714" stop-color="#f4fdfd"/><stop offset="0.6190" stop-color="#eaf7f7"/><stop offset="0.6667" stop-color="#d5e8e8"/><stop offset="0.7143" stop-color="#c8d8d8"/><stop offset="0.7619" stop-color="#bac9c9"/><stop offset="0.8254" stop-color="#a8b4b4"/><stop offset="0.8413" stop-color="#a4afaf"/><stop offset="0.8571" stop-color="#9fa9a9"/><stop offset="0.8730" stop-color="#99a3a3"/><stop offset="0.8889" stop-color="#949d9d"/><stop offset="0.9048" stop-color="#8f9697"/><stop offset="0.9206" stop-color="#898f8f"/><stop offset="0.9365" stop-color="#818484"/><stop offset="0.9524" stop-color="#747270"/><stop offset="0.9683" stop-color="#6c6865"/><stop offset="0.9841" stop-color="#6b6764"/><stop offset="1.0000" stop-color="#6a6662"/></linearGradient><linearGradient id="sk62" gradientUnits="userSpaceOnUse" x1="0" y1="52.55" x2="0" y2="115.55"><stop offset="0.0000" stop-color="#dbf3f9"/><stop offset="0.0476" stop-color="#dcf4fa"/><stop offset="0.0952" stop-color="#ddf5fa"/><stop offset="0.1429" stop-color="#dff6fa"/><stop offset="0.1905" stop-color="#e2f8fb"/><stop offset="0.2381" stop-color="#e5fafc"/><stop offset="0.2857" stop-color="#e8fbfe"/><stop offset="0.3333" stop-color="#ecfdfe"/><stop offset="0.3810" stop-color="#f0fdfe"/><stop offset="0.4286" stop-color="#f5fefe"/><stop offset="0.4762" stop-color="#f6fefe"/><stop offset="0.5238" stop-color="#f8ffff"/><stop offset="0.5714" stop-color="#f4fdfd"/><stop offset="0.6190" stop-color="#eaf7f7"/><stop offset="0.6667" stop-color="#d5e8e8"/><stop offset="0.7143" stop-color="#c7d8d8"/><stop offset="0.7619" stop-color="#bac8c8"/><stop offset="0.8254" stop-color="#a8b3b3"/><stop offset="0.8413" stop-color="#a3aeae"/><stop offset="0.8571" stop-color="#9ea8a8"/><stop offset="0.8730" stop-color="#99a2a2"/><stop offset="0.8889" stop-color="#949c9d"/><stop offset="0.9048" stop-color="#8f9697"/><stop offset="0.9206" stop-color="#898e8f"/><stop offset="0.9365" stop-color="#818484"/><stop offset="0.9524" stop-color="#747270"/><stop offset="0.9683" stop-color="#6c6865"/><stop offset="0.9841" stop-color="#6b6764"/><stop offset="1.0000" stop-color="#6a6662"/></linearGradient><linearGradient id="sk63" gradientUnits="userSpaceOnUse" x1="0" y1="52.58" x2="0" y2="115.58"><stop offset="0.0000" stop-color="#dbf4f9"/><stop offset="0.0476" stop-color="#dcf5fa"/><stop offset="0.0952" stop-color="#def6fa"/><stop offset="0.1429" stop-color="#dff7fa"/><stop offset="0.1905" stop-color="#e3f8fb"/><stop offset="0.2381" stop-color="#e6fafd"/><stop offset="0.2857" stop-color="#e8fcfe"/><stop offset="0.3333" stop-color="#ecfdfe"/><stop offset="0.3810" stop-color="#f1fefe"/><stop offset="0.4286" stop-color="#f5fefe"/><stop offset="0.4762" stop-color="#f6fefe"/><stop offset="0.5238" stop-color="#f7ffff"/><stop offset="0.5714" stop-color="#f3fdfd"/><stop offset="0.6190" stop-color="#e9f7f7"/><stop offset="0.6667" stop-color="#d5e8e8"/><stop offset="0.7143" stop-color="#c7d8d8"/><stop offset="0.7619" stop-color="#b9c7c7"/><stop offset="0.8254" stop-color="#a7b2b3"/><stop offset="0.8413" stop-color="#a3adad"/><stop offset="0.8571" stop-color="#9da7a8"/><stop offset="0.8730" stop-color="#98a1a2"/><stop offset="0.8889" stop-color="#939b9c"/><stop offset="0.9048" stop-color="#8e9596"/><stop offset="0.9206" stop-color="#888e8f"/><stop offset="0.9365" stop-color="#818484"/><stop offset="0.9524" stop-color="#747270"/><stop offset="0.9683" stop-color="#6c6865"/><stop offset="0.9841" stop-color="#6b6764"/><stop offset="1.0000" stop-color="#6a6662"/></linearGradient><linearGradient id="sk64" gradientUnits="userSpaceOnUse" x1="0" y1="52.61" x2="0" y2="115.61"><stop offset="0.0000" stop-color="#dcf4fa"/><stop offset="0.0476" stop-color="#ddf5fa"/><stop offset="0.0952" stop-color="#def6fa"/><stop offset="0.1429" stop-color="#e0f7fb"/><stop offset="0.1905" stop-color="#e4f9fc"/><stop offset="0.2381" stop-color="#e6fafd"/><stop offset="0.2857" stop-color="#e9fcfe"/><stop offset="0.3333" stop-color="#edfdfe"/><stop offset="0.3810" stop-color="#f1fefe"/><stop offset="0.4286" stop-color="#f5fefe"/><stop offset="0.4762" stop-color="#f6fefe"/><stop offset="0.5238" stop-color="#f7ffff"/><stop offset="0.5714" stop-color="#f3fdfd"/><stop offset="0.6190" stop-color="#e9f7f7"/><stop offset="0.6667" stop-color="#d5e7e7"/><stop offset="0.7143" stop-color="#c7d7d7"/><stop offset="0.7619" stop-color="#b8c7c7"/><stop offset="0.8254" stop-color="#a6b2b2"/><stop offset="0.8413" stop-color="#a2acad"/><stop offset="0.8571" stop-color="#9da7a7"/><stop offset="0.8730" stop-color="#98a1a1"/><stop offset="0.8889" stop-color="#939b9b"/><stop offset="0.9048" stop-color="#8e9596"/><stop offset="0.9206" stop-color="#888d8e"/><stop offset="0.9365" stop-color="#818484"/><stop offset="0.9524" stop-color="#747270"/><stop offset="0.9683" stop-color="#6c6865"/><stop offset="0.9841" stop-color="#6b6764"/><stop offset="1.0000" stop-color="#6a6662"/></linearGradient><linearGradient id="sk65" gradientUnits="userSpaceOnUse" x1="0" y1="52.65" x2="0" y2="115.65"><stop offset="0.0000" stop-color="#dcf4fa"/><stop offset="0.0476" stop-color="#def5fa"/><stop offset="0.0952" stop-color="#dff6fa"/><stop offset="0.1429" stop-color="#e1f7fb"/><stop offset="0.1905" stop-color="#e5f9fc"/><stop offset="0.2381" stop-color="#e7fbfd"/><stop offset="0.2857" stop-color="#eafcfe"/><stop offset="0.3333" stop-color="#edfdfe"/><stop offset="0.3810" stop-color="#f2fefe"/><stop offset="0.4286" stop-color="#f5fefe"/><stop offset="0.4762" stop-color="#f6fefe"/><stop offset="0.5238" stop-color="#f7ffff"/><stop offset="0.5714" stop-color="#f3fdfd"/><stop offset="0.6190" stop-color="#e9f7f7"/><stop offset="0.6667" stop-color="#d5e7e7"/><stop offset="0.7143" stop-color="#c6d7d7"/><stop offset="0.7619" stop-color="#b8c6c6"/><stop offset="0.8254" stop-color="#a6b1b1"/><stop offset="0.8413" stop-color="#a1acac"/><stop offset="0.8571" stop-color="#9ca6a6"/><stop offset="0.8730" stop-color="#97a0a0"/><stop offset="0.8889" stop-color="#929a9b"/><stop offset="0.9048" stop-color="#8d9495"/><stop offset="0.9206" stop-color="#888d8e"/><stop offset="0.9365" stop-color="#818484"/><stop offset="0.9524" stop-color="#747270"/><stop offset="0.9683" stop-color="#6c6865"/><stop offset="0.9841" stop-color="#6b6764"/><stop offset="1.0000" stop-color="#6a6662"/></linearGradient><linearGradient id="sk66" gradientUnits="userSpaceOnUse" x1="0" y1="52.69" x2="0" y2="115.69"><stop offset="0.0000" stop-color="#ddf5fa"/><stop offset="0.0476" stop-color="#def6fa"/><stop offset="0.0952" stop-color="#dff6fa"/><stop offset="0.1429" stop-color="#e1f7fb"/><stop offset="0.1905" stop-color="#e6f9fc"/><stop offset="0.2381" stop-color="#e8fbfd"/><stop offset="0.2857" stop-color="#ebfcfe"/><stop offset="0.3333" stop-color="#eefdfe"/><stop offset="0.3810" stop-color="#f2fefe"/><stop offset="0.4286" stop-color="#f5fefe"/><stop offset="0.4762" stop-color="#f6fefe"/><stop offset="0.5238" stop-color="#f7fefe"/><stop offset="0.5714" stop-color="#f3fdfd"/><stop offset="0.6190" stop-color="#e9f7f7"/><stop offset="0.6667" stop-color="#d5e7e7"/><stop offset="0.7143" stop-color="#c6d6d6"/><stop offset="0.7619" stop-color="#b7c5c5"/><stop offset="0.8254" stop-color="#a5b0b0"/><stop offset="0.8413" stop-color="#a1abab"/><stop offset="0.8571" stop-color="#9ca5a6"/><stop offset="0.8730" stop-color="#979fa0"/><stop offset="0.8889" stop-color="#92999a"/><stop offset="0.9048" stop-color="#8d9495"/><stop offset="0.9206" stop-color="#878d8d"/><stop offset="0.9365" stop-color="#818484"/><stop offset="0.9524" stop-color="#747270"/><stop offset="0.9683" stop-color="#6c6865"/><stop offset="0.9841" stop-color="#6b6764"/><stop offset="1.0000" stop-color="#6a6662"/></linearGradient><linearGradient id="sk67" gradientUnits="userSpaceOnUse" x1="0" y1="52.73" x2="0" y2="115.73"><stop offset="0.0000" stop-color="#ddf5fa"/><stop offset="0.0476" stop-color="#dff6fa"/><stop offset="0.0952" stop-color="#e0f7fb"/><stop offset="0.1429" stop-color="#e2f8fb"/><stop offset="0.1905" stop-color="#e7fafc"/><stop offset="0.2381" stop-color="#e9fbfd"/><stop offset="0.2857" stop-color="#ecfcfe"/><stop offset="0.3333" stop-color="#effdfe"/><stop offset="0.3810" stop-color="#f2fefe"/><stop offset="0.4286" stop-color="#f5fefe"/><stop offset="0.4762" stop-color="#f6fefe"/><stop offset="0.5238" stop-color="#f7fefe"/><stop offset="0.5714" stop-color="#f3fdfd"/><stop offset="0.6190" stop-color="#e9f7f7"/><stop offset="0.6667" stop-color="#d5e7e7"/><stop offset="0.7143" stop-color="#c5d6d6"/><stop offset="0.7619" stop-color="#b6c5c5"/><stop offset="0.8254" stop-color="#a4b0b0"/><stop offset="0.8413" stop-color="#a0aaaa"/><stop offset="0.8571" stop-color="#9ba4a5"/><stop offset="0.8730" stop-color="#969f9f"/><stop offset="0.8889" stop-color="#91999a"/><stop offset="0.9048" stop-color="#8d9394"/><stop offset="0.9206" stop-color="#878c8d"/><stop offset="0.9365" stop-color="#818384"/><stop offset="0.9524" stop-color="#747270"/><stop offset="0.9683" stop-color="#6c6865"/><stop offset="0.9841" stop-color="#6b6764"/><stop offset="1.0000" stop-color="#6a6662"/></linearGradient><linearGradient id="sk68" gradientUnits="userSpaceOnUse" x1="0" y1="52.78" x2="0" y2="115.78"><stop offset="0.0000" stop-color="#def5fa"/><stop offset="0.0476" stop-color="#dff6fa"/><stop offset="0.0952" stop-color="#e0f7fb"/><stop offset="0.1429" stop-color="#e3f8fb"/><stop offset="0.1905" stop-color="#e8fafc"/><stop offset="0.2381" stop-color="#eafbfd"/><stop offset="0.2857" stop-color="#ecfdfe"/><stop offset="0.3333" stop-color="#effdfe"/><stop offset="0.3810" stop-color="#f3fefe"/><stop offset="0.4286" stop-color="#f5fefe"/><stop offset="0.4762" stop-color="#f6fefe"/><stop offset="0.5238" stop-color="#f6fefe"/><stop offset="0.5714" stop-color="#f3fdfd"/><stop offset="0.6190" stop-color="#e9f7f7"/><stop offset="0.6667" stop-color="#d5e7e7"/><stop offset="0.7143" stop-color="#c5d6d6"/><stop offset="0.7619" stop-color="#b6c4c4"/><stop offset="0.8254" stop-color="#a4afaf"/><stop offset="0.8413" stop-color="#9fa9aa"/><stop offset="0.8571" stop-color="#9aa4a4"/><stop offset="0.8730" stop-color="#969e9f"/><stop offset="0.8889" stop-color="#919899"/><stop offset="0.9048" stop-color="#8c9393"/><stop offset="0.9206" stop-color="#878c8c"/><stop offset="0.9365" stop-color="#818384"/><stop offset="0.9524" stop-color="#747270"/><stop offset="0.9683" stop-color="#6c6865"/><stop offset="0.9841" stop-color="#6b6764"/><stop offset="1.0000" stop-color="#6a6662"/></linearGradient><linearGradient id="sk69" gradientUnits="userSpaceOnUse" x1="0" y1="52.83" x2="0" y2="115.83"><stop offset="0.0000" stop-color="#def6fa"/><stop offset="0.0476" stop-color="#e0f6fb"/><stop offset="0.0952" stop-color="#e1f7fb"/><stop offset="0.1429" stop-color="#e3f8fb"/><stop offset="0.1905" stop-color="#e9fbfd"/><stop offset="0.2381" stop-color="#ebfcfd"/><stop offset="0.2857" stop-color="#edfdfe"/><stop offset="0.3333" stop-color="#f0fefe"/><stop offset="0.3810" stop-color="#f3fefe"/><stop offset="0.4286" stop-color="#f6fefe"/><stop offset="0.4762" stop-color="#f6fefe"/><stop offset="0.5238" stop-color="#f6fefe"/><stop offset="0.5714" stop-color="#f3fdfd"/><stop offset="0.6190" stop-color="#e9f6f6"/><stop offset="0.6667" stop-color="#d4e7e7"/><stop offset="0.7143" stop-color="#c5d5d5"/><stop offset="0.7619" stop-color="#b5c4c4"/><stop offset="0.8254" stop-color="#a3aeae"/><stop offset="0.8413" stop-color="#9fa9a9"/><stop offset="0.8571" stop-color="#9aa3a4"/><stop offset="0.8730" stop-color="#959d9e"/><stop offset="0.8889" stop-color="#909898"/><stop offset="0.9048" stop-color="#8c9293"/><stop offset="0.9206" stop-color="#878b8c"/><stop offset="0.9365" stop-color="#808383"/><stop offset="0.9524" stop-color="#747270"/><stop offset="0.9683" stop-color="#6c6865"/><stop offset="0.9841" stop-color="#6b6764"/><stop offset="1.0000" stop-color="#6a6662"/></linearGradient><linearGradient id="sk70" gradientUnits="userSpaceOnUse" x1="0" y1="52.89" x2="0" y2="115.89"><stop offset="0.0000" stop-color="#dff6fa"/><stop offset="0.0476" stop-color="#e0f7fb"/><stop offset="0.0952" stop-color="#e2f8fb"/><stop offset="0.1429" stop-color="#e4f9fc"/><stop offset="0.1905" stop-color="#eafbfd"/><stop offset="0.2381" stop-color="#ecfcfe"/><stop offset="0.2857" stop-color="#eefdfe"/><stop offset="0.3333" stop-color="#f1fefe"/><stop offset="0.3810" stop-color="#f4fefe"/><stop offset="0.4286" stop-color="#f6fefe"/><stop offset="0.4762" stop-color="#f6fefe"/><stop offset="0.5238" stop-color="#f6fefe"/><stop offset="0.5714" stop-color="#f3fdfd"/><stop offset="0.6190" stop-color="#e9f6f6"/><stop offset="0.6667" stop-color="#d4e7e7"/><stop offset="0.7143" stop-color="#c4d5d5"/><stop offset="0.7619" stop-color="#b4c3c3"/><stop offset="0.8254" stop-color="#a2adae"/><stop offset="0.8413" stop-color="#9ea8a8"/><stop offset="0.8571" stop-color="#99a2a3"/><stop offset="0.8730" stop-color="#959d9d"/><stop offset="0.8889" stop-color="#909798"/><stop offset="0.9048" stop-color="#8b9192"/><stop offset="0.9206" stop-color="#868b8c"/><stop offset="0.9365" stop-color="#808383"/><stop offset="0.9524" stop-color="#747270"/><stop offset="0.9683" stop-color="#6c6865"/><stop offset="0.9841" stop-color="#6b6764"/><stop offset="1.0000" stop-color="#6a6662"/></linearGradient><linearGradient id="sk71" gradientUnits="userSpaceOnUse" x1="0" y1="52.95" x2="0" y2="115.95"><stop offset="0.0000" stop-color="#dff6fb"/><stop offset="0.0476" stop-color="#e1f7fb"/><stop offset="0.0952" stop-color="#e2f8fb"/><stop offset="0.1429" stop-color="#e5f9fc"/><stop offset="0.1905" stop-color="#eafbfd"/><stop offset="0.2381" stop-color="#edfcfe"/><stop offset="0.2857" stop-color="#effdfe"/><stop offset="0.3333" stop-color="#f1feff"/><stop offset="0.3810" stop-color="#f4feff"/><stop offset="0.4286" stop-color="#f6fefe"/><stop offset="0.4762" stop-color="#f6fefe"/><stop offset="0.5238" stop-color="#f6fefe"/><stop offset="0.5714" stop-color="#f3fdfd"/><stop offset="0.6190" stop-color="#e9f6f6"/><stop offset="0.6667" stop-color="#d4e7e7"/><stop offset="0.7143" stop-color="#c4d4d4"/><stop offset="0.7619" stop-color="#b4c2c2"/><stop offset="0.8254" stop-color="#a2adad"/><stop offset="0.8413" stop-color="#9da7a8"/><stop offset="0.8571" stop-color="#99a2a2"/><stop offset="0.8730" stop-color="#949c9d"/><stop offset="0.8889" stop-color="#8f9697"/><stop offset="0.9048" stop-color="#8b9192"/><stop offset="0.9206" stop-color="#868b8b"/><stop offset="0.9365" stop-color="#808383"/><stop offset="0.9524" stop-color="#747270"/><stop offset="0.9683" stop-color="#6c6865"/><stop offset="0.9841" stop-color="#6b6764"/><stop offset="1.0000" stop-color="#6a6662"/></linearGradient><linearGradient id="sk72" gradientUnits="userSpaceOnUse" x1="0" y1="53.02" x2="0" y2="116.02"><stop offset="0.0000" stop-color="#e0f7fb"/><stop offset="0.0476" stop-color="#e1f7fb"/><stop offset="0.0952" stop-color="#e3f8fb"/><stop offset="0.1429" stop-color="#e5f9fc"/><stop offset="0.1905" stop-color="#ebfcfd"/><stop offset="0.2381" stop-color="#eefdfe"/><stop offset="0.2857" stop-color="#f0fdfe"/><stop offset="0.3333" stop-color="#f2feff"/><stop offset="0.3810" stop-color="#f4feff"/><stop offset="0.4286" stop-color="#f6fefe"/><stop offset="0.4762" stop-color="#f6fefe"/><stop offset="0.5238" stop-color="#f6fefe"/><stop offset="0.5714" stop-color="#f3fdfd"/><stop offset="0.6190" stop-color="#e9f6f6"/><stop offset="0.6667" stop-color="#d4e6e6"/><stop offset="0.7143" stop-color="#c4d4d4"/><stop offset="0.7619" stop-color="#b3c2c2"/><stop offset="0.8254" stop-color="#a1acac"/><stop offset="0.8413" stop-color="#9da7a7"/><stop offset="0.8571" stop-color="#98a1a2"/><stop offset="0.8730" stop-color="#949b9c"/><stop offset="0.8889" stop-color="#8f9697"/><stop offset="0.9048" stop-color="#8b9091"/><stop offset="0.9206" stop-color="#868a8b"/><stop offset="0.9365" stop-color="#808383"/><stop offset="0.9524" stop-color="#747270"/><stop offset="0.9683" stop-color="#6c6865"/><stop offset="0.9841" stop-color="#6b6764"/><stop offset="1.0000" stop-color="#6a6662"/></linearGradient><linearGradient id="sk73" gradientUnits="userSpaceOnUse" x1="0" y1="53.08" x2="0" y2="116.08"><stop offset="0.0000" stop-color="#e0f7fb"/><stop offset="0.0476" stop-color="#e2f8fb"/><stop offset="0.0952" stop-color="#e3f8fc"/><stop offset="0.1429" stop-color="#e6fafc"/><stop offset="0.1905" stop-color="#ecfcfd"/><stop offset="0.2381" stop-color="#effdfe"/><stop offset="0.2857" stop-color="#f0fefe"/><stop offset="0.3333" stop-color="#f2feff"/><stop offset="0.3810" stop-color="#f5feff"/><stop offset="0.4286" stop-color="#f6fefe"/><stop offset="0.4762" stop-color="#f6fefe"/><stop offset="0.5238" stop-color="#f6fefe"/><stop offset="0.5714" stop-color="#f3fdfd"/><stop offset="0.6190" stop-color="#e9f6f6"/><stop offset="0.6667" stop-color="#d4e6e6"/><stop offset="0.7143" stop-color="#c3d4d4"/><stop offset="0.7619" stop-color="#b2c1c1"/><stop offset="0.8254" stop-color="#a0abab"/><stop offset="0.8413" stop-color="#9ca6a6"/><stop offset="0.8571" stop-color="#98a0a1"/><stop offset="0.8730" stop-color="#939b9b"/><stop offset="0.8889" stop-color="#8e9596"/><stop offset="0.9048" stop-color="#8a9091"/><stop offset="0.9206" stop-color="#858a8a"/><stop offset="0.9365" stop-color="#808383"/><stop offset="0.9524" stop-color="#747270"/><stop offset="0.9683" stop-color="#6c6865"/><stop offset="0.9841" stop-color="#6b6764"/><stop offset="1.0000" stop-color="#6a6662"/></linearGradient><linearGradient id="sk74" gradientUnits="userSpaceOnUse" x1="0" y1="53.16" x2="0" y2="116.16"><stop offset="0.0000" stop-color="#e1f7fb"/><stop offset="0.0476" stop-color="#e2f8fb"/><stop offset="0.0952" stop-color="#e4f9fc"/><stop offset="0.1429" stop-color="#e7fafc"/><stop offset="0.1905" stop-color="#edfcfe"/><stop offset="0.2381" stop-color="#f0fdfe"/><stop offset="0.2857" stop-color="#f1feff"/><stop offset="0.3333" stop-color="#f3feff"/><stop offset="0.3810" stop-color="#f5feff"/><stop offset="0.4286" stop-color="#f6fefe"/><stop offset="0.4762" stop-color="#f6fefe"/><stop offset="0.5238" stop-color="#f5fefe"/><stop offset="0.5714" stop-color="#f3fdfd"/><stop offset="0.6190" stop-color="#e9f6f6"/><stop offset="0.6667" stop-color="#d4e6e6"/><stop offset="0.7143" stop-color="#c3d3d3"/><stop offset="0.7619" stop-color="#b2c0c0"/><stop offset="0.8254" stop-color="#a0aaab"/><stop offset="0.8413" stop-color="#9ba5a6"/><stop offset="0.8571" stop-color="#97a0a0"/><stop offset="0.8730" stop-color="#929a9b"/><stop offset="0.8889" stop-color="#8e9595"/><stop offset="0.9048" stop-color="#8a8f90"/><stop offset="0.9206" stop-color="#85898a"/><stop offset="0.9365" stop-color="#808383"/><stop offset="0.9524" stop-color="#747270"/><stop offset="0.9683" stop-color="#6c6865"/><stop offset="0.9841" stop-color="#6b6764"/><stop offset="1.0000" stop-color="#6a6662"/></linearGradient><linearGradient id="sk75" gradientUnits="userSpaceOnUse" x1="0" y1="53.23" x2="0" y2="116.23"><stop offset="0.0000" stop-color="#e1f7fb"/><stop offset="0.0476" stop-color="#e3f8fc"/><stop offset="0.0952" stop-color="#e4f9fc"/><stop offset="0.1429" stop-color="#e7fafd"/><stop offset="0.1905" stop-color="#eefdfe"/><stop offset="0.2381" stop-color="#f0fefe"/><stop offset="0.2857" stop-color="#f2feff"/><stop offset="0.3333" stop-color="#f4feff"/><stop offset="0.3810" stop-color="#f6ffff"/><stop offset="0.4286" stop-color="#f6fefe"/><stop offset="0.4762" stop-color="#f6fefe"/><stop offset="0.5238" stop-color="#f5fefe"/><stop offset="0.5714" stop-color="#f3fdfd"/><stop offset="0.6190" stop-color="#e9f6f6"/><stop offset="0.6667" stop-color="#d4e6e6"/><stop offset="0.7143" stop-color="#c3d3d3"/><stop offset="0.7619" stop-color="#b1c0c0"/><stop offset="0.8254" stop-color="#9faaaa"/><stop offset="0.8413" stop-color="#9ba4a5"/><stop offset="0.8571" stop-color="#969fa0"/><stop offset="0.8730" stop-color="#92999a"/><stop offset="0.8889" stop-color="#8e9495"/><stop offset="0.9048" stop-color="#898f8f"/><stop offset="0.9206" stop-color="#858989"/><stop offset="0.9365" stop-color="#808383"/><stop offset="0.9524" stop-color="#747270"/><stop offset="0.9683" stop-color="#6c6865"/><stop offset="0.9841" stop-color="#6b6764"/><stop offset="1.0000" stop-color="#6a6662"/></linearGradient><linearGradient id="sk76" gradientUnits="userSpaceOnUse" x1="0" y1="53.31" x2="0" y2="116.31"><stop offset="0.0000" stop-color="#e2f8fb"/><stop offset="0.0476" stop-color="#e3f9fc"/><stop offset="0.0952" stop-color="#e5f9fc"/><stop offset="0.1429" stop-color="#e8fbfd"/><stop offset="0.1905" stop-color="#effdfe"/><stop offset="0.2381" stop-color="#f1fefe"/><stop offset="0.2857" stop-color="#f3feff"/><stop offset="0.3333" stop-color="#f4feff"/><stop offset="0.3810" stop-color="#f6ffff"/><stop offset="0.4286" stop-color="#f7fefe"/><stop offset="0.4762" stop-color="#f6fefe"/><stop offset="0.5238" stop-color="#f5fefe"/><stop offset="0.5714" stop-color="#f3fdfd"/><stop offset="0.6190" stop-color="#e9f6f6"/><stop offset="0.6667" stop-color="#d4e6e6"/><stop offset="0.7143" stop-color="#c2d2d2"/><stop offset="0.7619" stop-color="#b1bfbf"/><stop offset="0.8254" stop-color="#9ea9a9"/><stop offset="0.8413" stop-color="#9aa4a4"/><stop offset="0.8571" stop-color="#969e9f"/><stop offset="0.8730" stop-color="#91999a"/><stop offset="0.8889" stop-color="#8d9394"/><stop offset="0.9048" stop-color="#898e8f"/><stop offset="0.9206" stop-color="#858989"/><stop offset="0.9365" stop-color="#808283"/><stop offset="0.9524" stop-color="#747270"/><stop offset="0.9683" stop-color="#6c6865"/><stop offset="0.9841" stop-color="#6b6764"/><stop offset="1.0000" stop-color="#6a6662"/></linearGradient><linearGradient id="sk77" gradientUnits="userSpaceOnUse" x1="0" y1="53.40" x2="0" y2="116.40"><stop offset="0.0000" stop-color="#e2f8fc"/><stop offset="0.0476" stop-color="#e4f9fc"/><stop offset="0.0952" stop-color="#e5fafc"/><stop offset="0.1429" stop-color="#e9fbfd"/><stop offset="0.1905" stop-color="#f0fefe"/><stop offset="0.2381" stop-color="#f2feff"/><stop offset="0.2857" stop-color="#f3feff"/><stop offset="0.3333" stop-color="#f5ffff"/><stop offset="0.3810" stop-color="#f6ffff"/><stop offset="0.4286" stop-color="#f7ffff"/><stop offset="0.4762" stop-color="#f6fefe"/><stop offset="0.5238" stop-color="#f5fdfd"/><stop offset="0.5714" stop-color="#f3fdfd"/><stop offset="0.6190" stop-color="#e9f6f6"/><stop offset="0.6667" stop-color="#d4e6e6"/><stop offset="0.7143" stop-color="#c2d2d2"/><stop offset="0.7619" stop-color="#b0bebe"/><stop offset="0.8254" stop-color="#9ea8a9"/><stop offset="0.8413" stop-color="#99a3a3"/><stop offset="0.8571" stop-color="#959e9e"/><stop offset="0.8730" stop-color="#919899"/><stop offset="0.8889" stop-color="#8d9394"/><stop offset="0.9048" stop-color="#898e8e"/><stop offset="0.9206" stop-color="#848889"/><stop offset="0.9365" stop-color="#808282"/><stop offset="0.9524" stop-color="#747270"/><stop offset="0.9683" stop-color="#6c6865"/><stop offset="0.9841" stop-color="#6b6764"/><stop offset="1.0000" stop-color="#6a6662"/></linearGradient><linearGradient id="sk78" gradientUnits="userSpaceOnUse" x1="0" y1="53.48" x2="0" y2="116.48"><stop offset="0.0000" stop-color="#e3f8fc"/><stop offset="0.0476" stop-color="#e4f9fc"/><stop offset="0.0952" stop-color="#e6fafc"/><stop offset="0.1429" stop-color="#eafbfd"/><stop offset="0.1905" stop-color="#f1fefe"/><stop offset="0.2381" stop-color="#f3feff"/><stop offset="0.2857" stop-color="#f4ffff"/><stop offset="0.3333" stop-color="#f6ffff"/><stop offset="0.3810" stop-color="#f7ffff"/><stop offset="0.4286" stop-color="#f7ffff"/><stop offset="0.4762" stop-color="#f6fefe"/><stop offset="0.5238" stop-color="#f5fdfd"/><stop offset="0.5714" stop-color="#f3fdfd"/><stop offset="0.6190" stop-color="#e9f5f5"/><stop offset="0.6667" stop-color="#d4e6e6"/><stop offset="0.7143" stop-color="#c1d2d2"/><stop offset="0.7619" stop-color="#afbebe"/><stop offset="0.8254" stop-color="#9da7a8"/><stop offset="0.8413" stop-color="#99a2a3"/><stop offset="0.8571" stop-color="#959d9e"/><stop offset="0.8730" stop-color="#909798"/><stop offset="0.8889" stop-color="#8c9293"/><stop offset="0.9048" stop-color="#888d8e"/><stop offset="0.9206" stop-color="#848888"/><stop offset="0.9365" stop-color="#808282"/><stop offset="0.9524" stop-color="#747270"/><stop offset="0.9683" stop-color="#6c6865"/><stop offset="0.9841" stop-color="#6b6764"/><stop offset="1.0000" stop-color="#6a6662"/></linearGradient><linearGradient id="sk79" gradientUnits="userSpaceOnUse" x1="0" y1="53.57" x2="0" y2="116.57"><stop offset="0.0000" stop-color="#e4f9fc"/><stop offset="0.0476" stop-color="#e5f9fc"/><stop offset="0.0952" stop-color="#e7fafd"/><stop offset="0.1429" stop-color="#eafcfd"/><stop offset="0.1905" stop-color="#f2feff"/><stop offset="0.2381" stop-color="#f4ffff"/><stop offset="0.2857" stop-color="#f5ffff"/><stop offset="0.3333" stop-color="#f6ffff"/><stop offset="0.3810" stop-color="#f7ffff"/><stop offset="0.4286" stop-color="#f7ffff"/><stop offset="0.4762" stop-color="#f6fefe"/><stop offset="0.5238" stop-color="#f4fdfd"/><stop offset="0.5714" stop-color="#f3fcfc"/><stop offset="0.6190" stop-color="#e9f5f5"/><stop offset="0.6667" stop-color="#d3e5e5"/><stop offset="0.7143" stop-color="#c1d1d1"/><stop offset="0.7619" stop-color="#afbdbd"/><stop offset="0.8254" stop-color="#9ca7a7"/><stop offset="0.8413" stop-color="#98a1a2"/><stop offset="0.8571" stop-color="#949c9d"/><stop offset="0.8730" stop-color="#909798"/><stop offset="0.8889" stop-color="#8c9292"/><stop offset="0.9048" stop-color="#888c8d"/><stop offset="0.9206" stop-color="#848788"/><stop offset="0.9365" stop-color="#808282"/><stop offset="0.9524" stop-color="#747270"/><stop offset="0.9683" stop-color="#6c6865"/><stop offset="0.9841" stop-color="#6b6764"/><stop offset="1.0000" stop-color="#6a6662"/></linearGradient><linearGradient id="sk80" gradientUnits="userSpaceOnUse" x1="0" y1="53.67" x2="0" y2="116.67"><stop offset="0.0000" stop-color="#e4f9fc"/><stop offset="0.0476" stop-color="#e6fafc"/><stop offset="0.0952" stop-color="#e7fafd"/><stop offset="0.1429" stop-color="#ebfcfd"/><stop offset="0.1905" stop-color="#f3ffff"/><stop offset="0.2381" stop-color="#f5ffff"/><stop offset="0.2857" stop-color="#f6ffff"/><stop offset="0.3333" stop-color="#f7ffff"/><stop offset="0.3810" stop-color="#f8ffff"/><stop offset="0.4286" stop-color="#f7ffff"/><stop offset="0.4762" stop-color="#f6fefe"/><stop offset="0.5238" stop-color="#f4fdfd"/><stop offset="0.5714" stop-color="#f3fcfc"/><stop offset="0.6190" stop-color="#e9f5f5"/><stop offset="0.6667" stop-color="#d3e5e5"/><stop offset="0.7143" stop-color="#c1d1d1"/><stop offset="0.7619" stop-color="#aebcbc"/><stop offset="0.8254" stop-color="#9ca6a7"/><stop offset="0.8413" stop-color="#98a1a1"/><stop offset="0.8571" stop-color="#939c9c"/><stop offset="0.8730" stop-color="#8f9697"/><stop offset="0.8889" stop-color="#8b9192"/><stop offset="0.9048" stop-color="#878c8d"/><stop offset="0.9206" stop-color="#838787"/><stop offset="0.9365" stop-color="#808282"/><stop offset="0.9524" stop-color="#747270"/><stop offset="0.9683" stop-color="#6c6865"/><stop offset="0.9841" stop-color="#6b6764"/><stop offset="1.0000" stop-color="#6a6662"/></linearGradient><linearGradient id="sk81" gradientUnits="userSpaceOnUse" x1="0" y1="53.77" x2="0" y2="116.77"><stop offset="0.0000" stop-color="#e4f9fc"/><stop offset="0.0476" stop-color="#e6fafc"/><stop offset="0.0952" stop-color="#e7fafd"/><stop offset="0.1429" stop-color="#ebfcfd"/><stop offset="0.1905" stop-color="#f3ffff"/><stop offset="0.2381" stop-color="#f5ffff"/><stop offset="0.2857" stop-color="#f6ffff"/><stop offset="0.3333" stop-color="#f7ffff"/><stop offset="0.3810" stop-color="#f8ffff"/><stop offset="0.4286" stop-color="#f7ffff"/><stop offset="0.4762" stop-color="#f6fefe"/><stop offset="0.5238" stop-color="#f4fdfd"/><stop offset="0.5714" stop-color="#f3fcfc"/><stop offset="0.6190" stop-color="#e9f5f5"/><stop offset="0.6667" stop-color="#d3e5e5"/><stop offset="0.7143" stop-color="#c1d1d1"/><stop offset="0.7619" stop-color="#aebcbc"/><stop offset="0.8254" stop-color="#9ca6a7"/><stop offset="0.8413" stop-color="#98a1a1"/><stop offset="0.8571" stop-color="#939c9c"/><stop offset="0.8730" stop-color="#8f9697"/><stop offset="0.8889" stop-color="#8b9192"/><stop offset="0.9048" stop-color="#878c8d"/><stop offset="0.9206" stop-color="#838787"/><stop offset="0.9365" stop-color="#808282"/><stop offset="0.9524" stop-color="#747270"/><stop offset="0.9683" stop-color="#6c6865"/><stop offset="0.9841" stop-color="#6b6764"/><stop offset="1.0000" stop-color="#6a6662"/></linearGradient><linearGradient id="sk82" gradientUnits="userSpaceOnUse" x1="0" y1="53.87" x2="0" y2="116.87"><stop offset="0.0000" stop-color="#e4f9fc"/><stop offset="0.0476" stop-color="#e6fafc"/><stop offset="0.0952" stop-color="#e7fafd"/><stop offset="0.1429" stop-color="#ebfcfd"/><stop offset="0.1905" stop-color="#f3ffff"/><stop offset="0.2381" stop-color="#f5ffff"/><stop offset="0.2857" stop-color="#f6ffff"/><stop offset="0.3333" stop-color="#f7ffff"/><stop offset="0.3810" stop-color="#f8ffff"/><stop offset="0.4286" stop-color="#f7ffff"/><stop offset="0.4762" stop-color="#f6fefe"/><stop offset="0.5238" stop-color="#f4fdfd"/><stop offset="0.5714" stop-color="#f3fcfc"/><stop offset="0.6190" stop-color="#e9f5f5"/><stop offset="0.6667" stop-color="#d3e5e5"/><stop offset="0.7143" stop-color="#c1d1d1"/><stop offset="0.7619" stop-color="#aebcbc"/><stop offset="0.8254" stop-color="#9ca6a7"/><stop offset="0.8413" stop-color="#98a1a1"/><stop offset="0.8571" stop-color="#939c9c"/><stop offset="0.8730" stop-color="#8f9697"/><stop offset="0.8889" stop-color="#8b9192"/><stop offset="0.9048" stop-color="#878c8d"/><stop offset="0.9206" stop-color="#838787"/><stop offset="0.9365" stop-color="#808282"/><stop offset="0.9524" stop-color="#747270"/><stop offset="0.9683" stop-color="#6c6865"/><stop offset="0.9841" stop-color="#6b6764"/><stop offset="1.0000" stop-color="#6a6662"/></linearGradient><linearGradient id="sk83" gradientUnits="userSpaceOnUse" x1="0" y1="53.98" x2="0" y2="116.98"><stop offset="0.0000" stop-color="#e4f9fc"/><stop offset="0.0476" stop-color="#e6fafc"/><stop offset="0.0952" stop-color="#e7fafd"/><stop offset="0.1429" stop-color="#ebfcfd"/><stop offset="0.1905" stop-color="#f3ffff"/><stop offset="0.2381" stop-color="#f5ffff"/><stop offset="0.2857" stop-color="#f6ffff"/><stop offset="0.3333" stop-color="#f7ffff"/><stop offset="0.3810" stop-color="#f8ffff"/><stop offset="0.4286" stop-color="#f7ffff"/><stop offset="0.4762" stop-color="#f6fefe"/><stop offset="0.5238" stop-color="#f4fdfd"/><stop offset="0.5714" stop-color="#f3fcfc"/><stop offset="0.6190" stop-color="#e9f5f5"/><stop offset="0.6667" stop-color="#d3e5e5"/><stop offset="0.7143" stop-color="#c1d1d1"/><stop offset="0.7619" stop-color="#aebcbc"/><stop offset="0.8254" stop-color="#9ca6a7"/><stop offset="0.8413" stop-color="#98a1a1"/><stop offset="0.8571" stop-color="#939c9c"/><stop offset="0.8730" stop-color="#8f9697"/><stop offset="0.8889" stop-color="#8b9192"/><stop offset="0.9048" stop-color="#878c8d"/><stop offset="0.9206" stop-color="#838787"/><stop offset="0.9365" stop-color="#808282"/><stop offset="0.9524" stop-color="#747270"/><stop offset="0.9683" stop-color="#6c6865"/><stop offset="0.9841" stop-color="#6b6764"/><stop offset="1.0000" stop-color="#6a6662"/></linearGradient><linearGradient id="sk84" gradientUnits="userSpaceOnUse" x1="0" y1="54.09" x2="0" y2="117.09"><stop offset="0.0000" stop-color="#e4f9fc"/><stop offset="0.0476" stop-color="#e6fafc"/><stop offset="0.0952" stop-color="#e7fafd"/><stop offset="0.1429" stop-color="#ebfcfd"/><stop offset="0.1905" stop-color="#f3ffff"/><stop offset="0.2381" stop-color="#f5ffff"/><stop offset="0.2857" stop-color="#f6ffff"/><stop offset="0.3333" stop-color="#f7ffff"/><stop offset="0.3810" stop-color="#f8ffff"/><stop offset="0.4286" stop-color="#f7ffff"/><stop offset="0.4762" stop-color="#f6fefe"/><stop offset="0.5238" stop-color="#f4fdfd"/><stop offset="0.5714" stop-color="#f3fcfc"/><stop offset="0.6190" stop-color="#e9f5f5"/><stop offset="0.6667" stop-color="#d3e5e5"/><stop offset="0.7143" stop-color="#c1d1d1"/><stop offset="0.7619" stop-color="#aebcbc"/><stop offset="0.8254" stop-color="#9ca6a7"/><stop offset="0.8413" stop-color="#98a1a1"/><stop offset="0.8571" stop-color="#939c9c"/><stop offset="0.8730" stop-color="#8f9697"/><stop offset="0.8889" stop-color="#8b9192"/><stop offset="0.9048" stop-color="#878c8d"/><stop offset="0.9206" stop-color="#838787"/><stop offset="0.9365" stop-color="#808282"/><stop offset="0.9524" stop-color="#747270"/><stop offset="0.9683" stop-color="#6c6865"/><stop offset="0.9841" stop-color="#6b6764"/><stop offset="1.0000" stop-color="#6a6662"/></linearGradient><linearGradient id="gnd" gradientUnits="userSpaceOnUse" x1="0" y1="133" x2="0" y2="503"><stop offset="0" stop-color="#69615b"/><stop offset="0.3" stop-color="#675f59"/><stop offset="1" stop-color="#665e58"/></linearGradient></defs>
<rect x="290" y="55" width="8" height="100" fill="url(#sk0)"/>
<rect x="298" y="55" width="8" height="100" fill="url(#sk1)"/>
<rect x="306" y="55" width="8" height="100" fill="url(#sk2)"/>
<rect x="314" y="55" width="8" height="100" fill="url(#sk3)"/>
<rect x="322" y="55" width="8" height="100" fill="url(#sk4)"/>
<rect x="330" y="55" width="8" height="100" fill="url(#sk5)"/>
<rect x="338" y="55" width="8" height="100" fill="url(#sk6)"/>
<rect x="346" y="55" width="8" height="100" fill="url(#sk7)"/>
<rect x="354" y="55" width="8" height="100" fill="url(#sk8)"/>
<rect x="362" y="55" width="8" height="100" fill="url(#sk9)"/>
<rect x="370" y="55" width="8" height="100" fill="url(#sk10)"/>
<rect x="378" y="55" width="8" height="100" fill="url(#sk11)"/>
<rect x="386" y="55" width="8" height="100" fill="url(#sk12)"/>
<rect x="394" y="55" width="8" height="100" fill="url(#sk13)"/>
<rect x="402" y="55" width="8" height="100" fill="url(#sk14)"/>
<rect x="410" y="55" width="8" height="100" fill="url(#sk15)"/>
<rect x="418" y="55" width="8" height="100" fill="url(#sk16)"/>
<rect x="426" y="55" width="8" height="100" fill="url(#sk17)"/>
<rect x="434" y="55" width="8" height="100" fill="url(#sk18)"/>
<rect x="442" y="55" width="8" height="100" fill="url(#sk19)"/>
<rect x="450" y="55" width="8" height="100" fill="url(#sk20)"/>
<rect x="458" y="55" width="8" height="100" fill="url(#sk21)"/>
<rect x="466" y="55" width="8" height="100" fill="url(#sk22)"/>
<rect x="474" y="55" width="8" height="100" fill="url(#sk23)"/>
<rect x="482" y="55" width="8" height="100" fill="url(#sk24)"/>
<rect x="490" y="55" width="8" height="100" fill="url(#sk25)"/>
<rect x="498" y="55" width="8" height="100" fill="url(#sk26)"/>
<rect x="506" y="55" width="8" height="100" fill="url(#sk27)"/>
<rect x="514" y="55" width="8" height="100" fill="url(#sk28)"/>
<rect x="522" y="55" width="8" height="100" fill="url(#sk29)"/>
<rect x="530" y="55" width="8" height="100" fill="url(#sk30)"/>
<rect x="538" y="55" width="8" height="100" fill="url(#sk31)"/>
<rect x="546" y="55" width="8" height="100" fill="url(#sk32)"/>
<rect x="554" y="55" width="8" height="100" fill="url(#sk33)"/>
<rect x="562" y="55" width="8" height="100" fill="url(#sk34)"/>
<rect x="570" y="55" width="8" height="100" fill="url(#sk35)"/>
<rect x="578" y="55" width="8" height="100" fill="url(#sk36)"/>
<rect x="586" y="55" width="8" height="100" fill="url(#sk37)"/>
<rect x="594" y="55" width="8" height="100" fill="url(#sk38)"/>
<rect x="602" y="55" width="8" height="100" fill="url(#sk39)"/>
<rect x="610" y="55" width="8" height="100" fill="url(#sk40)"/>
<rect x="618" y="55" width="8" height="100" fill="url(#sk41)"/>
<rect x="626" y="55" width="8" height="100" fill="url(#sk42)"/>
<rect x="634" y="55" width="8" height="100" fill="url(#sk43)"/>
<rect x="642" y="55" width="8" height="100" fill="url(#sk44)"/>
<rect x="650" y="55" width="8" height="100" fill="url(#sk45)"/>
<rect x="658" y="55" width="8" height="100" fill="url(#sk46)"/>
<rect x="666" y="55" width="8" height="100" fill="url(#sk47)"/>
<rect x="674" y="55" width="8" height="100" fill="url(#sk48)"/>
<rect x="682" y="55" width="8" height="100" fill="url(#sk49)"/>
<rect x="690" y="55" width="8" height="100" fill="url(#sk50)"/>
<rect x="698" y="55" width="8" height="100" fill="url(#sk51)"/>
<rect x="706" y="55" width="8" height="100" fill="url(#sk52)"/>
<rect x="714" y="55" width="8" height="100" fill="url(#sk53)"/>
<rect x="722" y="55" width="8" height="100" fill="url(#sk54)"/>
<rect x="730" y="55" width="8" height="100" fill="url(#sk55)"/>
<rect x="738" y="55" width="8" height="100" fill="url(#sk56)"/>
<rect x="746" y="55" width="8" height="100" fill="url(#sk57)"/>
<rect x="754" y="55" width="8" height="100" fill="url(#sk58)"/>
<rect x="762" y="55" width="8" height="100" fill="url(#sk59)"/>
<rect x="770" y="55" width="8" height="100" fill="url(#sk60)"/>
<rect x="778" y="55" width="8" height="100" fill="url(#sk61)"/>
<rect x="786" y="55" width="8" height="100" fill="url(#sk62)"/>
<rect x="794" y="55" width="8" height="100" fill="url(#sk63)"/>
<rect x="802" y="55" width="8" height="100" fill="url(#sk64)"/>
<rect x="810" y="55" width="8" height="100" fill="url(#sk65)"/>
<rect x="818" y="55" width="8" height="100" fill="url(#sk66)"/>
<rect x="826" y="55" width="8" height="100" fill="url(#sk67)"/>
<rect x="834" y="55" width="8" height="100" fill="url(#sk68)"/>
<rect x="842" y="55" width="8" height="100" fill="url(#sk69)"/>
<rect x="850" y="55" width="8" height="100" fill="url(#sk70)"/>
<rect x="858" y="55" width="8" height="100" fill="url(#sk71)"/>
<rect x="866" y="55" width="8" height="100" fill="url(#sk72)"/>
<rect x="874" y="55" width="8" height="100" fill="url(#sk73)"/>
<rect x="882" y="55" width="8" height="100" fill="url(#sk74)"/>
<rect x="890" y="55" width="8" height="100" fill="url(#sk75)"/>
<rect x="898" y="55" width="8" height="100" fill="url(#sk76)"/>
<rect x="906" y="55" width="8" height="100" fill="url(#sk77)"/>
<rect x="914" y="55" width="8" height="100" fill="url(#sk78)"/>
<rect x="922" y="55" width="8" height="100" fill="url(#sk79)"/>
<rect x="930" y="55" width="8" height="100" fill="url(#sk80)"/>
<rect x="938" y="55" width="8" height="100" fill="url(#sk81)"/>
<rect x="946" y="55" width="8" height="100" fill="url(#sk82)"/>
<rect x="954" y="55" width="8" height="100" fill="url(#sk83)"/>
<rect x="962" y="55" width="8" height="100" fill="url(#sk84)"/>
<rect x="290" y="120" width="673" height="383" fill="#6a6662"/>
<ellipse cx="650" cy="600" rx="1300" ry="466.5" fill="url(#gnd)"/>
<!-- grid lines -->
<clipPath id="gclip"><ellipse cx="650" cy="601" rx="1300" ry="466.5"/></clipPath>
<g stroke="#9a9c98" stroke-opacity="0.14" stroke-width="1" fill="none" clip-path="url(#gclip)">
<path d="M290 149.8 L536 137 L700 128"/>
<path d="M290 163.7 L497 149.8 L700 131"/>
<path d="M290 185.5 L449 172.8"/>
<path d="M290 223.3 L453 195.5"/>
<path d="M290 301 L465 257"/>
<path d="M290 353 L482 299"/>
<path d="M290 460 L505 380"/>
<path d="M302 148 L361 175.6 L417 200.7 L451 215"/>
<path d="M421 141 L497 157 L560 172"/>
<path d="M290 215 L380 290 L470 380 L560 503"/>
<path d="M534 503 L600 427 L640 395"/>
<path d="M699 143 L817 153.7 L963 169"/>
<path d="M699 161.6 L760 170.4 L913 191 L963 197.5"/>
<path d="M699 199.7 L856 232.5 L963 254"/>
<path d="M699 191 L762 171 L817 153.7 L865 140.6"/>
<path d="M799 269.7 L856 232.5 L913 191 L963 162.5"/>
<path d="M699 151.6 L768.7 136"/>
<path d="M963 330 L900 400 L850 503"/>
</g>
<g stroke="#9a9c98" stroke-opacity="0.08" stroke-width="1" fill="none">
<path d="M290 404 L347.7 380 L420 352"/>
<path d="M290 434 L395.4 388 L480 353"/>
<path d="M290 473 L349.7 441.6 L435.2 409.8 L505 383"/>
<path d="M330 503 L367.6 480 L435.2 436.7 L515 400"/>
<path d="M300 352 L316 380 L334.8 413.8 L349.7 442.6 L367.6 474.4 L385 503"/>
<path d="M365 350 L389.5 380 L413.3 409.8 L435.2 436.7 L459 467.5 L487 503"/>
<path d="M440 352 L465 380 L480 396 L520 442"/>
</g>
<!-- wall -->
<polygon points="445,174.5 698,138.5 698,334 521,459" fill="#838e9d"/>
<path d="M445.2 174.9 L697.8 138.9" stroke="#9dadc8" stroke-width="1.3" fill="none"/>
<polygon points="491,343 582,416 521,459" fill="#7e8997"/>
<!-- floor -->
<linearGradient id="flg" gradientUnits="userSpaceOnUse" x1="491" y1="315" x2="941" y2="345">
<stop offset="0" stop-color="#94a4c1"/><stop offset="0.708" stop-color="#93a3c0"/><stop offset="0.722" stop-color="#9babc7"/><stop offset="0.82" stop-color="#9fafcb"/><stop offset="0.835" stop-color="#a7b6d1"/><stop offset="0.886" stop-color="#a9b8d3"/><stop offset="0.899" stop-color="#afbed8"/><stop offset="1" stop-color="#b5c3dc"/>
</linearGradient>
<clipPath id="flclip"><polygon points="491,343 624.5,282.5 742,264.5 935.5,322 846,503 698.4,503"/></clipPath>
<polygon points="491,343 624.5,282.5 742,264.5 935.5,322 846,503 698.4,503" fill="url(#flg)"/>
<path d="M756 262 C 772 282, 782 302, 781.5 326 C 781 360, 778 420, 768 503 L 480 503 L 480 260 Z" fill="#8e9fbb" clip-path="url(#flclip)"/>
<path d="M752 262 C 766 282, 775 302, 775 326 C 775 360, 772 420, 763 503 L 757 503 C 766 420, 770 360, 769 326 C 769 302, 760 282, 746 262 Z" fill="#8a9ab7" fill-opacity="0.35" clip-path="url(#flclip)"/>
<!-- floor side -->
<polygon points="582,416 580,411.4 698.4,503 688,503" fill="#7b8796"/>
<!-- big shadow -->
<polygon points="517.5,361.5 626,317 700,356 658,396 601,425" fill="#6880a5"/>
<!-- cube shadow -->
<polygon points="646.5,461 669.3,444.7 713,473.7 727.5,467.5 700,503 698.4,503" fill="#6880a5"/>
<!-- tall box -->
<polygon points="620.3,226.5 716.8,254.8 718.5,365.6 627.5,318" fill="#7e8999"/>
<polygon points="716.8,254.8 742.7,242.7 737.5,345 718.5,365.6" fill="#828d9d"/>
<polygon points="620.3,226.5 649,217.3 742.7,242.7 716.8,254.8" fill="#8d9dba"/>
<!-- selected cube -->
<polygon points="727.5,333 782,355 714.8,420.2 657.8,385.6" fill="#8e9eba"/>
<polygon points="657.8,385.6 714.8,420.2 712.9,473 659.3,435.7" fill="#808b9b"/>
<polygon points="714.8,420.2 782,355 774.6,404 712.9,473" fill="#7f8a99"/>
<g stroke="#c8d0dc" stroke-opacity="0.22" stroke-width="0.8" fill="none">
<path d="M657.8 385.6 L714.8 420.2 L782 355 M714.8 420.2 L712.9 473 M659.3 435.7 L714.8 420.2 M657.8 385.6 L782 355 M712.9 473 L782 355"/>
</g>
<polygon points="727.5,333 782,355 774.6,404 712.9,473 659.3,435.7 657.8,385.6" fill="none" stroke="#ff6a1c" stroke-width="1.6" stroke-linejoin="round"/>
<!-- gizmo plane handles -->
<polygon points="721.7,396 737.2,404.3 727,415.5 710,405.8" fill="#7fe07a" fill-opacity="0.45" stroke="#8cf080" stroke-opacity="0.8" stroke-width="0.8"/>
<polygon points="721.7,396 721.7,380.5 740,388.4 737.2,404.3" fill="#7a8cf0" fill-opacity="0.4" stroke="#8090ff" stroke-opacity="0.6" stroke-width="0.8"/>
<polygon points="721.7,396 710,405.8 710,390 721.3,381" fill="#e08a90" fill-opacity="0.2" stroke="#e07078" stroke-opacity="0.7" stroke-width="0.8"/>
<!-- gizmo axes -->
<line x1="721.8" y1="396" x2="757" y2="362" stroke="#3b6cf5" stroke-width="2"/>
<ellipse cx="758.5" cy="360.5" rx="5.5" ry="6" fill="#1f3fe8"/>
<polygon points="754,356 766.7,353.8 763,365" fill="#1f3fe8"/>
<polygon points="757,354.5 766.7,353.8 762,357" fill="#0e1f90"/>
<line x1="721.8" y1="396" x2="725.6" y2="338" stroke="#8df03a" stroke-width="1.6"/>
<polygon points="726.4,318 718.6,334.5 732.6,334.5" fill="#5fe00a"/>
<ellipse cx="725.6" cy="334.8" rx="7" ry="3.4" fill="#5fd010"/>
<line x1="721.8" y1="396" x2="787" y2="430" stroke="#d23c48" stroke-width="2.8" stroke-opacity="0.88"/>
<polygon points="790.4,424.2 808.8,442.8 792,440.4 784.4,437.8 785.4,430" fill="#e20808"/>
<polygon points="790.4,424.2 808.8,442.8 800,437.5 789.5,427" fill="#8a0404"/>
<!-- cursor -->
<path d="M791.2 431 L791.2 445.8 L794.3 442.9 L796.7 448.2 L799.2 447.1 L796.9 442.1 L801.6 442.1 Z" fill="#000" stroke="#fff" stroke-width="1" stroke-linejoin="round"/>

</svg>
</div>

<!-- ICONS OVERLAY -->
<svg class="abs" id="icons" style="left:0;top:0;" width="963" height="503" viewBox="0 0 963 503">
<g fill="#c4c4c4" stroke="none">
<!-- hand -->
<path d="M10 3.5 C10 2.3 11.6 2.3 11.9 3.4 L13.3 7 L13.2 0 L15.4 0 L15.9 5.5 L16.4 0 L18.6 0 L18.7 5.6 L19.6 0 L21.6 0 L21.2 6.5 L22.6 2.6 C23 1.6 24.6 2 24.3 3.2 L22.3 10 L21 13 L14.8 13 L13 10.5 Z"/>
<!-- move -->
<g transform="translate(49 6)">
<path d="M-1 -4.4 H1 V-1 H-1 Z M-1 1 H1 V4.4 H-1 Z M-4.4 -1 H-1 V1 H-4.4 Z M1 -1 H4.4 V1 H1 Z" fill="#b0aeac"/>
<path d="M-7.8 0 L-4.1 -2.7 V2.7 Z M7.8 0 L4.1 -2.7 V2.7 Z M0 7.7 L-2.7 4 H2.7 Z M0 -7.7 L-2.7 -4 H2.7 Z" fill="#f2f2f2"/>
</g>
<!-- play -->
<path d="M654.7 1 L654.7 11.2 L663.3 6.1 Z"/>
<rect x="686.9" y="1" width="3.2" height="10.1" rx="0.8"/><rect x="692" y="1" width="3.2" height="10.1" rx="0.8"/>
</g>
<g fill="#7a7a7a"><path d="M718 1 L718 11.2 L725.6 6.1 Z"/><rect x="725.9" y="1" width="2" height="10.2"/></g>
<!-- rotate -->
<g fill="none" stroke="#c4c4c4" stroke-width="1.2">
<path d="M78.2 -0.5 A7.77 7.77 0 0 0 78.8 12.6"/>
<path d="M84.4 -0.5 A7.3 7.3 0 0 1 81.4 12.7"/>
<path d="M74.2 12.7 H78.9 V8.4"/>
<path d="M84.5 -2 V1.6"/>
</g>
<!-- scale -->
<g fill="none" stroke="#c4c4c4" stroke-width="1.1">
<path d="M107 0 V12.3 H119.4 V0"/>
<rect x="107" y="8.7" width="3.8" height="3.6"/>
<path d="M112 7 L117 2.2 M113.6 2 H117.2 V5.6"/>
</g>
<!-- rect -->
<g fill="#c4c4c4">
<rect x="138" y="-1" width="2.8" height="2.2"/><rect x="149.4" y="-1" width="2.8" height="2.2"/>
<rect x="138" y="10" width="2.8" height="2.8"/><rect x="149.4" y="10" width="2.8" height="2.8"/>
<rect x="139" y="2.4" width="1" height="6.4"/><rect x="150.4" y="2.4" width="1" height="6.4"/>
<rect x="142" y="11" width="6.2" height="1"/><rect x="142" y="-0.4" width="6.2" height="1"/>
</g>
<!-- transform -->
<g transform="translate(176.7 6)">
<circle r="6.6" fill="none" stroke="#a8a8a8" stroke-width="1"/>
<circle r="4.4" fill="none" stroke="#8a8a8a" stroke-width="0.8"/>
<path d="M-0.6 -3.5 H0.6 V-0.6 H3.5 V0.6 H0.6 V3.5 H-0.6 V0.6 H-3.5 V-0.6 H-0.6 Z" fill="#c4c4c4"/>
<path d="M-5.4 0 L-3 -1.8 V1.8 Z M5.4 0 L3 -1.8 V1.8 Z M0 5.4 L-1.8 3 H1.8 Z M0 -5.4 L-1.8 -3 H1.8 Z" fill="#c4c4c4"/>
<path d="M-7.2 7.4 L-7.2 4 L-4 7.4 Z" fill="#c4c4c4"/>
</g>
<!-- custom tools (wrench + pencil) -->
<g id="toolsic">
<g stroke="#c4c4c4" fill="none">
<path d="M216.6 0 L205.4 11.2" stroke-width="2.8"/>
<path d="M209.2 5.2 L215.6 11.8" stroke-width="2.5"/>
<path d="M202.8 1.2 A3.3 3.3 0 0 0 209 2.2 L208.8 -1" stroke-width="2.1"/>
</g>
<path d="M203.1 13.4 L203.9 10.1 L206.5 12.7 Z" fill="#c4c4c4"/>
<path d="M204.2 9.6 L207 12.4 M213.2 0.6 L216 3.4" stroke="#3a3a3a" stroke-width="0.6" fill="none"/>
</g>
<!-- center icon -->
<g fill="none">
<path d="M239.5 0 V12.2 H252.4 V0" stroke="#c4c4c4" stroke-width="1"/>
<path d="M241.5 10.5 L250.8 0.5" stroke="#c4c4c4" stroke-width="0.9"/>
<circle cx="246" cy="6" r="2.8" fill="#383838" stroke="#ff6a2c" stroke-width="1.2"/>
</g>
<!-- global icon -->
<g fill="none" stroke="#b0b0b0" stroke-width="1">
<circle cx="310" cy="5.6" r="6.8"/>
<ellipse cx="310" cy="5.6" rx="3" ry="6.8"/>
<path d="M303.2 5.6 H316.8 M304.2 1.8 H315.8 M304.4 9.4 H313"/>
</g>
<circle cx="314.6" cy="9.8" r="2.7" fill="#383838" stroke="#ff6a2c" stroke-width="1.3"/>
<!-- snap icon -->
<g stroke="#f4f4f4" stroke-width="1.2" fill="none">
<path d="M378.2 1.6 H390.6 M378.2 5.6 H382.6 M378.2 9.5 H382.2 M380.4 0 V11.6 M384.5 0 V4.8 M388.6 0 V4.8"/>
</g>
<g fill="#f4f4f4"><rect x="383" y="6.1" width="2.1" height="2"/><rect x="383" y="11" width="2.1" height="2"/></g>
<path d="M386.2 7.3 H388.6 A2.3 2.3 0 0 1 388.6 11.9 H386.2" fill="none" stroke="#ff7033" stroke-width="2"/>

<!-- TAB ICONS -->
<g fill="#c4c4c4">
<rect x="1" y="26.4" width="1.6" height="1.4"/><rect x="3" y="29.6" width="1.4" height="1.3"/><rect x="3" y="33.6" width="1.4" height="1.3"/>
<rect x="4.4" y="26.5" width="6.8" height="1.2"/><rect x="5.2" y="29.7" width="6" height="1.2"/><rect x="5.2" y="33.7" width="6" height="1.2"/>
</g>
<!-- lock -->
<g fill="none" stroke="#c4c4c4" stroke-width="1.1">
<rect x="254.4" y="30.4" width="7.4" height="4.2"/>
<path d="M255.8 28 A2.4 2.4 0 0 1 260.6 28.2 V30.4"/>
</g>
<g fill="#c4c4c4">
<rect x="274.2" y="25.6" width="2" height="2"/><rect x="274.2" y="29.4" width="2" height="2"/><rect x="274.2" y="33.2" width="2" height="2"/>
<rect x="274.7" y="63.4" width="2" height="2"/><rect x="274.7" y="67.2" width="2" height="2"/><rect x="274.7" y="71" width="2" height="2"/>
</g>
<!-- scene # icon -->
<g stroke="#c8c8c8" stroke-width="1.1" fill="none">
<path d="M297.6 28.7 H308.4 M297.6 32.6 H308.4 M301.5 25.4 V35.6 M305.3 25.4 V35.6"/>
</g>
<!-- game icon -->
<g>
<rect x="374.9" y="27.8" width="14.2" height="6.8" rx="3.4" fill="#c4c4c4"/>
<path d="M377 31.2 H381 M379 29.2 V33.2" stroke="#282828" stroke-width="1"/>
<circle cx="384.6" cy="32.2" r="0.8" fill="#282828"/><circle cx="386.6" cy="30.2" r="0.8" fill="#282828"/>
</g>
<!-- animator icon -->
<g stroke="#c4c4c4" stroke-width="1.3" fill="none">
<path d="M453 26.4 L455.6 30.4 L453 34.8 M455.6 30.4 H461"/>
</g>
<path d="M459.2 27.6 L462.8 30.4 L459.2 33.2 Z" fill="#c4c4c4"/>

<!-- TOOLROW ICONS -->
<g fill="#c4c4c4">
<rect x="0" y="49" width="12" height="1.8"/><rect x="5.2" y="44" width="1.8" height="11.8"/>
<path d="M16 48.2 H24 L20 52.4 Z"/>
<path d="M398 47.6 H406.4 L402.2 52 Z"/>
<path d="M529.6 47.8 H537.4 L533.5 51.8 Z"/>
<path d="M605.6 47.8 H613.4 L609.5 51.8 Z"/>
<path d="M771.6 47.8 H779.4 L775.5 51.8 Z"/>
<path d="M838.4 47.8 H846.2 L842.3 51.8 Z"/>
</g>
<!-- search icons -->
<g fill="none" stroke="#b8b8b8" stroke-width="1.2">
<circle cx="43.8" cy="49" r="2.1"/><path d="M45.4 50.6 L48 53.2"/>
<circle cx="866.8" cy="49" r="2.1"/><path d="M868.4 50.6 L871 53.2"/>
</g>
<path d="M47.6 48.6 H50.4 L49 50.2 Z M870.6 48.6 H873.4 L872 50.2 Z" fill="#b8b8b8"/>
<!-- light bulb -->
<g fill="#c8c8c8">
<path d="M461.4 44 A4.2 4.2 0 0 1 463.6 51.6 V52.6 H459.2 V51.6 A4.2 4.2 0 0 1 461.4 44 Z"/>
<rect x="459.6" y="53.4" width="3.6" height="1.4" rx="0.6"/>
</g>
<!-- audio -->
<g fill="#c4c4c4">
<rect x="481" y="47" width="2.2" height="5.4"/>
<path d="M484 47 L487.6 44.6 V54.6 L484 52.4 Z"/>
</g>
<g fill="none" stroke="#c4c4c4" stroke-width="1.1">
<path d="M489.4 47.4 A3 3 0 0 1 489.4 52"/><path d="M491 45.4 A5.6 5.6 0 0 1 491 54"/>
</g>
<!-- effects -->
<g fill="#c4c4c4">
<path d="M505.6 51 L512.6 47.6 L517.4 50 L511.6 53.2 Z"/>
<path d="M505.6 53.2 L507.2 52.4 L511.6 54.6 L516 52.4 L517.6 53.2 L511.6 56.2 Z"/>
<path d="M516.4 43.6 L517.4 46.2 L520 47.2 L517.4 48.2 L516.4 50.8 L515.4 48.2 L512.8 47.2 L515.4 46.2 Z"/>
</g>
<rect x="525.2" y="44" width="1" height="11.6" fill="#363636"/>
<rect x="601" y="44" width="1" height="11.6" fill="#363636"/>
<rect x="833.6" y="44" width="1" height="11.6" fill="#2e2e2e"/>
<!-- hidden eye -->
<g fill="none" stroke="#c4c4c4" stroke-width="1.1">
<path d="M548.4 50 C551.4 45.4 559 45.4 562 50 C559 54.6 551.4 54.6 548.4 50 Z"/>
<circle cx="555.2" cy="50" r="1.8"/>
<path d="M549.6 55.6 L560.8 44"/>
</g>
<!-- grid y icon -->
<g stroke="#c8c8c8" stroke-width="1.1" fill="none">
<path d="M581.4 46.4 H594 M581.4 50 H589.6 M581.4 53.6 H589 M583.8 43.8 V55.8 M588.8 43.8 V50.6 M591.8 43.8 V48"/>
<path d="M589.6 50.4 L592.3 53.6 L595 50.4 M592.3 53.6 V56.8" stroke-width="1.5"/>
</g>
<!-- tools icon small -->
<g transform="translate(737 50.2) scale(0.86) translate(-209.8 -6.2)">
<g stroke="#c4c4c4" fill="none">
<path d="M216.6 0 L205.4 11.2" stroke-width="2.8"/>
<path d="M209.2 5.2 L215.8 12" stroke-width="2.6"/>
<path d="M203.6 1.6 A2.9 2.9 0 0 0 209 2.4 L208.8 -0.6" stroke-width="2.4"/>
</g>
<path d="M203.1 13.4 L203.9 10.1 L206.5 12.7 Z" fill="#c4c4c4"/>
<path d="M204.2 9.6 L207 12.4 M213.2 0.6 L216 3.4" stroke="#383838" stroke-width="0.6" fill="none"/>
</g>
<!-- camera -->
<g fill="#c4c4c4">
<rect x="755.2" y="46.2" width="8.2" height="8" rx="1"/>
<path d="M764.4 48.6 L767.2 46.2 V54.2 L764.4 51.8 Z"/>
</g>

<!-- HIERARCHY ICONS -->
<path d="M27 65 H36 L31.5 73 Z" fill="#858585"/>
<!-- unity logo -->
<g fill="none" stroke="#e6e6e6" stroke-width="1.4" stroke-linejoin="round" stroke-linecap="round">
<path d="M40.6 68.4 L50.4 62.6 Q52.8 68.4 50.4 74.2 Z"/>
<path d="M40.6 68.4 H47.2 L50.2 63 M47.2 68.4 L50.2 73.8"/>
</g>
<g fill="none" stroke="#d0d0d0" stroke-width="1.1" stroke-linejoin="round" transform="translate(60.5 85)"><path d="M0 -6.2 L5.8 -3.2 V3.2 L0 6.4 L-5.8 3.2 V-3.2 Z M-5.8 -3.2 L0 0 L5.8 -3.2 M0 0 V6.4"/></g>
<g fill="none" stroke="#d0d0d0" stroke-width="1.1" stroke-linejoin="round" transform="translate(60.5 101)"><path d="M0 -6.2 L5.8 -3.2 V3.2 L0 6.4 L-5.8 3.2 V-3.2 Z M-5.8 -3.2 L0 0 L5.8 -3.2 M0 0 V6.4"/></g>
<g fill="none" stroke="#d0d0d0" stroke-width="1.1" stroke-linejoin="round" transform="translate(60.5 117)"><path d="M0 -6.2 L5.8 -3.2 V3.2 L0 6.4 L-5.8 3.2 V-3.2 Z M-5.8 -3.2 L0 0 L5.8 -3.2 M0 0 V6.4"/></g>
<g fill="none" stroke="#d0d0d0" stroke-width="1.1" stroke-linejoin="round" transform="translate(60.5 133)"><path d="M0 -6.2 L5.8 -3.2 V3.2 L0 6.4 L-5.8 3.2 V-3.2 Z M-5.8 -3.2 L0 0 L5.8 -3.2 M0 0 V6.4"/></g>
<g fill="none" stroke="#d0d0d0" stroke-width="1.1" stroke-linejoin="round" transform="translate(60.5 149)"><path d="M0 -6.2 L5.8 -3.2 V3.2 L0 6.4 L-5.8 3.2 V-3.2 Z M-5.8 -3.2 L0 0 L5.8 -3.2 M0 0 V6.4"/></g>
<g fill="none" stroke="#d0d0d0" stroke-width="1.1" stroke-linejoin="round" transform="translate(60.5 165)"><path d="M0 -6.2 L5.8 -3.2 V3.2 L0 6.4 L-5.8 3.2 V-3.2 Z M-5.8 -3.2 L0 0 L5.8 -3.2 M0 0 V6.4"/></g>

</svg>
</body>
</html>
